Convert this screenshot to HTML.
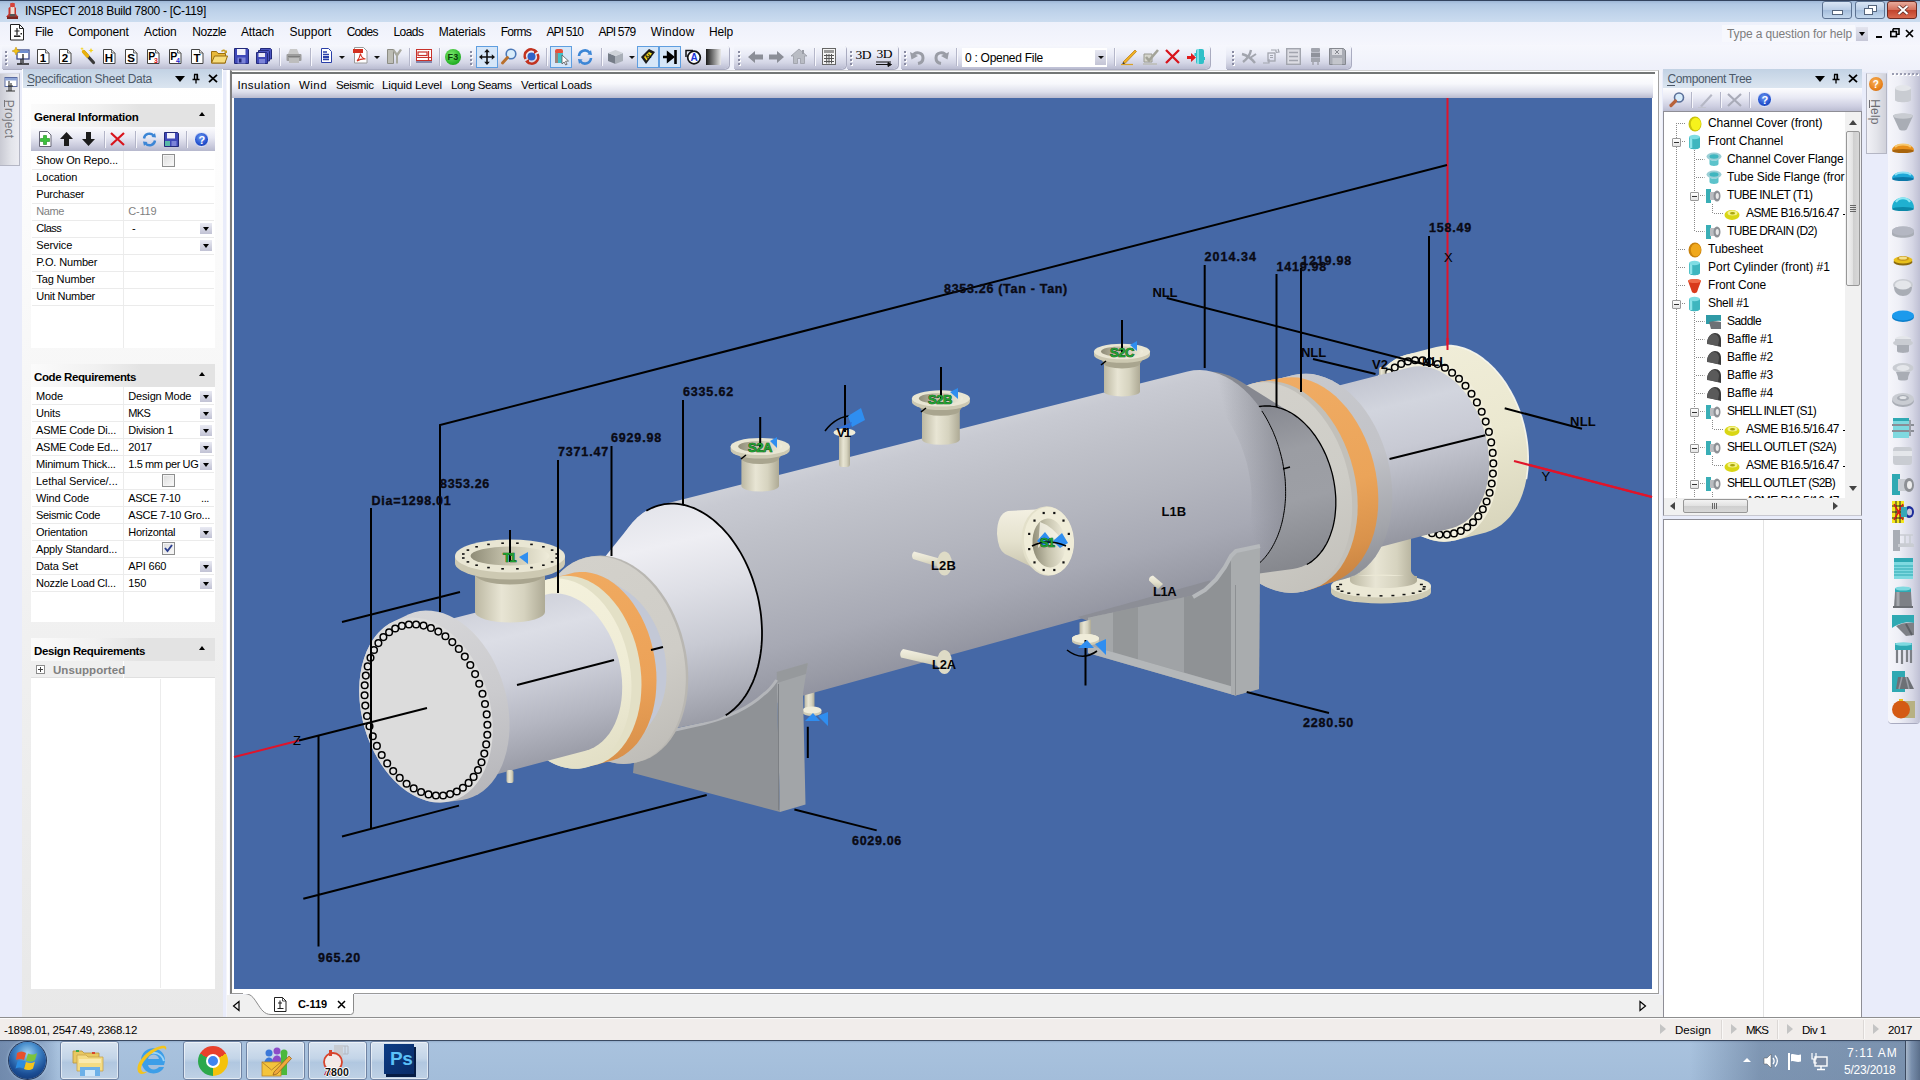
<!DOCTYPE html>
<html><head><meta charset="utf-8"><title>INSPECT 2018 Build 7800 - [C-119]</title>
<style>
*{box-sizing:border-box;margin:0;padding:0}
html,body{width:1920px;height:1080px;overflow:hidden;background:#e9ecfa;font-family:"Liberation Sans",sans-serif;font-size:12px;color:#000}
.a{position:absolute}
.t{position:absolute;white-space:nowrap;line-height:14px}
svg{position:absolute;overflow:visible}
#title{left:0;top:0;width:1920px;height:22px;background:linear-gradient(#9db6d6 0,#b1c8e3 3px,#bfd3ea 11px,#cbdcef 21px);border-top:1px solid #33435e}
#menubar{left:0;top:22px;width:1920px;height:23px;background:linear-gradient(#eef1fb,#f5f6fd)}
#tbrow{left:0;top:45px;width:1920px;height:27px;background:linear-gradient(#f6f7fd,#eef0fa)}
.tb{position:absolute;top:45px;height:24px;background:linear-gradient(#f7f8fd 0,#e9ebf6 40%,#d3d5e5 75%,#babcd1 100%);border-radius:0 4px 5px 0;box-shadow:1px 1px 0 #a9abc0}
.mi{position:absolute;top:25px;font-size:12px;line-height:14px;white-space:nowrap;letter-spacing:.3px}
.ph{position:absolute;height:19px;background:linear-gradient(#c2d2e4,#dbe5f0);color:#5a6878;font-size:12px}
.row{position:absolute;left:0;width:100%;height:17px;border-bottom:1px solid #ebebeb;font-size:11px;line-height:16px;white-space:nowrap}
.row .k{position:absolute;left:4px;top:0}
.row .v{position:absolute;left:96px;top:0}
.dd{position:absolute;left:169px;top:3px;width:11px;height:11px;background:linear-gradient(#e6e7f1,#c3c4d5)}
.dd:after{content:"";position:absolute;left:2px;top:4px;border:3.5px solid transparent;border-top:4px solid #000;border-bottom:0}
.gh{position:absolute;left:0;height:23px;width:100%;background:#e4e4e4;font-weight:bold;font-size:11.5px;line-height:23px;padding-left:2px}
.tr{position:absolute;font-size:12px;line-height:14px;white-space:nowrap;letter-spacing:.25px}
.cb{position:absolute;width:13px;height:13px;border:1px solid #8e8f8f;background:linear-gradient(135deg,#dcdcdc,#fafafa);box-shadow:inset 0 0 0 1px #f4f4f4}

</style></head><body>
<!-- sec_chrome -->
<div id="title" class="a"></div>
<svg style="left:4px;top:2px" width="17" height="18" viewBox="0 0 17 18"><path d="M6.5 1h4v3.5l1.5 1.5v6l2.5 3H2l2.500-3V6L6.500 4.500z" fill="#c9332b"/><rect x="6.500" y="5" width="4" height="7" fill="#ecdcd4"/><circle cx="8.500" cy="3" r="2.300" fill="#d8423a"/><rect x="3" y="14.500" width="11" height="2.500" fill="#7a2620"/><rect x="5.500" y="12" width="6" height="2.500" fill="#555"/></svg>
<div class="t" style="left:25px;top:3.84px;font-size:12px;line-height:14px;letter-spacing:-0.304px;">INSPECT 2018 Build 7800 - [C-119]</div>
<div class="a" style="left:1822px;top:1px;width:30px;height:18px;border:1px solid #5c7291;border-radius:3px;background:linear-gradient(#d9e6f5,#b9cde6 48%,#a5bedc 52%,#c4d8ed)"><div class="a" style="left:9px;top:8px;width:11px;height:5px;border:1px solid #55657c;background:#fff"></div></div>
<div class="a" style="left:1855px;top:1px;width:30px;height:18px;border:1px solid #5c7291;border-radius:3px;background:linear-gradient(#d9e6f5,#b9cde6 48%,#a5bedc 52%,#c4d8ed)"><div class="a" style="left:12px;top:3px;width:9px;height:7px;border:1px solid #55657c;background:#fff"></div><div class="a" style="left:8px;top:6px;width:9px;height:7px;border:1px solid #55657c;background:#fff"></div></div>
<div class="a" style="left:1887px;top:1px;width:30px;height:18px;border:1px solid #6b2a22;border-radius:3px;background:linear-gradient(#e8ab9c,#d4705c 48%,#c1432d 52%,#d96a50)"><svg style="left:9px;top:3px" width="12" height="10" viewBox="0 0 12 10"><path d="M1.5 1l9 8M10.5 1l-9 8" stroke="#5a2a25" stroke-width="3.600"/><path d="M1.500 1l9 8M10.500 1l-9 8" stroke="#fff" stroke-width="2.100"/></svg></div>
<div id="menubar" class="a"></div>
<svg style="left:10px;top:24px" width="15" height="17" viewBox="0 0 15 17"><path d="M.5.5h9l4 4v11.500H.5z" fill="#fff" stroke="#222" stroke-width="1"/><path d="M9.500.5v4h4" fill="none" stroke="#222"/><path d="M7 4v8M4.500 7h5M4 12.500h6.500M5 12v-1M9 12v-1" stroke="#222" stroke-width="1.200" fill="none"/><rect x="10.500" y="9" width="1.500" height="1.500" fill="#222"/></svg>
<div class="t" style="left:35px;top:25.14px;font-size:12px;line-height:14px;letter-spacing:-0.336px;">File</div>
<div class="t" style="left:68.2px;top:25.14px;font-size:12px;line-height:14px;letter-spacing:-0.162px;">Component</div>
<div class="t" style="left:144px;top:25.14px;font-size:12px;line-height:14px;letter-spacing:-0.127px;">Action</div>
<div class="t" style="left:192.3px;top:25.14px;font-size:12px;line-height:14px;letter-spacing:-0.498px;">Nozzle</div>
<div class="t" style="left:241px;top:25.14px;font-size:12px;line-height:14px;letter-spacing:-0.171px;">Attach</div>
<div class="t" style="left:289.4px;top:25.14px;font-size:12px;line-height:14px;letter-spacing:-0.006px;">Support</div>
<div class="t" style="left:346.7px;top:25.14px;font-size:12px;line-height:14px;letter-spacing:-0.739px;">Codes</div>
<div class="t" style="left:393.4px;top:25.14px;font-size:12px;line-height:14px;letter-spacing:-0.541px;">Loads</div>
<div class="t" style="left:438.7px;top:25.14px;font-size:12px;line-height:14px;letter-spacing:-0.221px;">Materials</div>
<div class="t" style="left:500.7px;top:25.14px;font-size:12px;line-height:14px;letter-spacing:-0.740px;">Forms</div>
<div class="t" style="left:546.4px;top:25.14px;font-size:12px;line-height:14px;letter-spacing:-0.844px;">API 510</div>
<div class="t" style="left:598.5px;top:25.14px;font-size:12px;line-height:14px;letter-spacing:-0.830px;">API 579</div>
<div class="t" style="left:650.7px;top:25.14px;font-size:12px;line-height:14px;letter-spacing:0.185px;">Window</div>
<div class="t" style="left:709px;top:25.14px;font-size:12px;line-height:14px;letter-spacing:-0.172px;">Help</div>
<div class="a" style="left:1722px;top:25px;width:133px;height:17px;background:#f7f8fd"></div>
<div class="t" style="left:1727px;top:26.84px;font-size:12px;line-height:14px;color:#7d7d7d;letter-spacing:-0.130px;">Type a question for help</div>
<div class="a" style="left:1856px;top:27px;width:12px;height:14px;background:linear-gradient(#e3e4ee,#c6c7d7)"><div class="a" style="left:3px;top:5px;border:3px solid transparent;border-top:4px solid #000;border-bottom:0"></div></div>
<div class="a" style="left:1876px;top:36px;width:6px;height:2px;background:#000"></div>
<svg style="left:1890px;top:28px" width="10" height="10" viewBox="0 0 10 10"><path d="M3 .8h6v5.400H7M3 .8V3" fill="none" stroke="#000" stroke-width="1.600"/><rect x=".8" y="3.600" width="5.600" height="5" fill="none" stroke="#000" stroke-width="1.600"/></svg>
<svg style="left:1905px;top:29px" width="9" height="9" viewBox="0 0 9 9"><path d="M1 1l7 7M8 1L1 8" stroke="#000" stroke-width="1.700"/></svg>
<!-- sec_toolbar -->
<div id="tbrow" class="a"></div>
<div class="tb" style="left:2px;width:727px"></div>
<div class="tb" style="left:734px;width:112px"></div>
<div class="tb" style="left:847px;width:51px"></div>
<div class="tb" style="left:901px;width:309px"></div>
<div class="tb" style="left:1226px;width:125px"></div>
<div class="a" style="left:5px;top:51px;width:2px;height:2px;background:#8a8ca3;box-shadow:1px 1px 0 #fff"></div><div class="a" style="left:5px;top:55px;width:2px;height:2px;background:#8a8ca3;box-shadow:1px 1px 0 #fff"></div><div class="a" style="left:5px;top:59px;width:2px;height:2px;background:#8a8ca3;box-shadow:1px 1px 0 #fff"></div><div class="a" style="left:5px;top:63px;width:2px;height:2px;background:#8a8ca3;box-shadow:1px 1px 0 #fff"></div>
<svg style="left:12px;top:47px" width="18" height="19" viewBox="0 0 18 19"><rect x="5" y="3" width="12" height="9" fill="#fff" stroke="#3b4a8a" stroke-width="1.300"/><rect x="5.500" y="3.500" width="11" height="2.500" fill="#6f8fd0"/><path d="M9 12v5M5 17h12M11 7v9" stroke="#222" stroke-width="1.300"/><path d="M4 0l1.200 2.800L8 4 5.200 5.200 4 8 2.800 5.200 0 4l2.800-1.200z" fill="#f2c318" stroke="#c08a00" stroke-width=".5"/></svg>
<svg style="left:37px;top:48px" width="13" height="17" viewBox="0 0 13 17"><path d="M.5 1.500h8l3.500 3.500v10.500H.5z" fill="#fff" stroke="#444" stroke-width="1"/><path d="M8.500 1.500V5H12" fill="#d8d8d8" stroke="#444" stroke-width=".8"/><text x="6" y="13.500" font-size="11.500" font-weight="bold" fill="#000" text-anchor="middle">1</text></svg>
<svg style="left:59px;top:48px" width="13" height="17" viewBox="0 0 13 17"><path d="M.5 1.500h8l3.500 3.500v10.500H.5z" fill="#fff" stroke="#444" stroke-width="1"/><path d="M8.500 1.500V5H12" fill="#d8d8d8" stroke="#444" stroke-width=".8"/><text x="6" y="13.500" font-size="11.500" font-weight="bold" fill="#000" text-anchor="middle">2</text></svg>
<svg style="left:80px;top:47px" width="16" height="18" viewBox="0 0 16 18"><path d="M4 5l9.500 10.500" stroke="#3a3a3a" stroke-width="3.200" stroke-linecap="round"/><path d="M3.500 4.500l4 4.500" stroke="#e9b10c" stroke-width="3.400" stroke-linecap="round"/><path d="M11 1l.8 1.700 1.700.8-1.700.8L11 6l-.8-1.700-1.700-.8 1.700-.8zM2 0l.5 1.200L3.700 1.700 2.500 2.200 2 3.400 1.500 2.200.3 1.700 1.500 1.200z" fill="#f5d21b"/></svg>
<svg style="left:103px;top:48px" width="13" height="17" viewBox="0 0 13 17"><path d="M.5 1.500h8l3.500 3.500v10.500H.5z" fill="#fff" stroke="#444" stroke-width="1"/><path d="M8.500 1.500V5H12" fill="#d8d8d8" stroke="#444" stroke-width=".8"/><text x="6" y="13.500" font-size="11.500" font-weight="bold" fill="#000" text-anchor="middle">H</text></svg>
<svg style="left:125px;top:48px" width="13" height="17" viewBox="0 0 13 17"><path d="M.5 1.500h8l3.500 3.500v10.500H.5z" fill="#fff" stroke="#444" stroke-width="1"/><path d="M8.500 1.500V5H12" fill="#d8d8d8" stroke="#444" stroke-width=".8"/><text x="6" y="13.500" font-size="11.500" font-weight="bold" fill="#000" text-anchor="middle">S</text></svg>
<svg style="left:147px;top:48px" width="13" height="17" viewBox="0 0 13 17"><path d="M.5 1.500h8l3.500 3.500v10.500H.5z" fill="#fff" stroke="#444" stroke-width="1"/><path d="M8.500 1.500V5H12" fill="#d8d8d8" stroke="#444" stroke-width=".8"/><text x="1.200" y="11.500" font-size="10.500" font-weight="bold" fill="#000">P</text><text x="7" y="14.500" font-size="7" font-weight="bold" fill="#d11">3</text></svg>
<svg style="left:169px;top:48px" width="13" height="17" viewBox="0 0 13 17"><path d="M.5 1.500h8l3.500 3.500v10.500H.5z" fill="#fff" stroke="#444" stroke-width="1"/><path d="M8.500 1.500V5H12" fill="#d8d8d8" stroke="#444" stroke-width=".8"/><text x="1.200" y="11.500" font-size="10.500" font-weight="bold" fill="#000">P</text><text x="7" y="14.500" font-size="7" font-weight="bold" fill="#22c">4</text></svg>
<svg style="left:191px;top:48px" width="13" height="17" viewBox="0 0 13 17"><path d="M.5 1.500h8l3.500 3.500v10.500H.5z" fill="#fff" stroke="#444" stroke-width="1"/><path d="M8.500 1.500V5H12" fill="#d8d8d8" stroke="#444" stroke-width=".8"/><text x="6" y="13.500" font-size="11.500" font-weight="bold" fill="#000" text-anchor="middle">T</text></svg>
<svg style="left:211px;top:48px" width="17" height="16" viewBox="0 0 17 16"><path d="M.5 3.500h5l1.500 2h7.500v9.500H.5z" fill="#e9b93a" stroke="#9a6f10" stroke-width="1"/><path d="M.5 15l3-7h13l-2.500 7z" fill="#f7dd7c" stroke="#9a6f10" stroke-width="1"/><path d="M10 3c1.500-2 4-2 5 0l1-1v3h-3l1-1c-.8-1-2-1-3 0z" fill="#c9a02a"/></svg>
<svg style="left:234px;top:48px" width="15" height="16" viewBox="0 0 15 16"><path d="M.5.5h13l1 1v14H.5z" fill="#3f49b8" stroke="#232a7a"/><rect x="3" y="1" width="8.500" height="6" fill="#f2f2fa"/><rect x="3.500" y="9.500" width="8" height="6" fill="#7c84d8"/><rect x="5" y="10.500" width="2.500" height="4" fill="#232a7a"/></svg>
<svg style="left:256px;top:48px" width="16" height="16" viewBox="0 0 16 16"><path d="M4.500.5h10l1 1v9.500h-11z" fill="#4b55c0" stroke="#232a7a"/><path d="M2.500 2.500h10l1 1v9.500h-11z" fill="#4b55c0" stroke="#232a7a"/><path d="M.5 4.500h10l1 1v10h-11z" fill="#3f49b8" stroke="#232a7a"/><rect x="2.500" y="5" width="6.500" height="4" fill="#e8e8f6"/><rect x="3" y="11" width="6" height="4.500" fill="#7c84d8"/></svg>
<div class="a" style="left:278.5px;top:48px;width:1px;height:18px;background:#b5b7ca;box-shadow:1px 0 0 #f8f8fd"></div>
<svg style="left:286px;top:48px" width="16" height="16" viewBox="0 0 16 16"><path d="M4 1h7l2 5H2z" fill="#c9c9c9"/><rect x=".5" y="6" width="15" height="7" rx="1" fill="#9d9d9d"/><rect x="3" y="10" width="10" height="5" fill="#bdbdbd"/><rect x="2" y="8" width="12" height="1" fill="#7d7d7d"/></svg>
<div class="a" style="left:309.5px;top:48px;width:1px;height:18px;background:#b5b7ca;box-shadow:1px 0 0 #f8f8fd"></div>
<svg style="left:321px;top:48px" width="11" height="15" viewBox="0 0 11 15"><path d="M.5.5h7l3 3v11H.5z" fill="#fff" stroke="#2a3fa8"/><path d="M2 4h4M2 6.500h6M2 11.500h6" stroke="#2a3fa8" stroke-width="1.300"/><rect x="2" y="8" width="6" height="2.300" fill="#2a3fa8"/></svg>
<div class="a" style="left:338.5px;top:56px;border:3px solid transparent;border-top:3.500px solid #111;border-bottom:0"></div>
<svg style="left:353px;top:47px" width="15" height="17" viewBox="0 0 15 17"><path d="M1.500.5h9l3.500 3.500v12H1.500z" fill="#fff" stroke="#9a9a9a"/><rect x="0" y="2" width="10" height="4" fill="#d32f1f"/><path d="M4 14c2-2 3-5 3.500-7.500M7.500 6.500c.5 3 2.500 5 5 5.500-3-.5-6 .5-8.500 2" stroke="#d32f1f" stroke-width="1.100" fill="none"/></svg>
<div class="a" style="left:373.5px;top:56px;border:3px solid transparent;border-top:3.500px solid #111;border-bottom:0"></div>
<svg style="left:387px;top:48px" width="15" height="16" viewBox="0 0 15 16"><path d="M.5 1.500h6v14h-6z" fill="#bdbdb5" stroke="#8c8c84"/><path d="M7 1l3 4 3-4 2 1-4 6v7.500H9V8L5.500 2.500z" fill="#a9a99f"/></svg>
<div class="a" style="left:408.5px;top:48px;width:1px;height:18px;background:#b5b7ca;box-shadow:1px 0 0 #f8f8fd"></div>
<svg style="left:416px;top:49px" width="16" height="14" viewBox="0 0 16 14"><rect x=".5" y=".5" width="15" height="11" fill="#fff" stroke="#c8312b"/><rect x="2" y="3" width="9" height="3.500" fill="none" stroke="#c8312b" stroke-width="1.200"/><path d="M1 8.500h14M12.500 2v9" stroke="#c8312b" stroke-width="1.200"/><path d="M0 13h16" stroke="#6b6b9a" stroke-width="1.500"/></svg>
<div class="a" style="left:438.5px;top:48px;width:1px;height:18px;background:#b5b7ca;box-shadow:1px 0 0 #f8f8fd"></div>
<div class="a" style="left:445px;top:49px;width:16px;height:16px;border-radius:8px;background:radial-gradient(circle at 40% 35%,#7be86d,#27b327 65%,#168a16)"></div>
<div class="t" style="left:447.5px;top:52.38px;font-size:9px;line-height:11px;font-weight:bold;color:#0b3d0b;letter-spacing:0.250px;">F3</div>
<div class="a" style="left:470px;top:51px;width:2px;height:2px;background:#8a8ca3;box-shadow:1px 1px 0 #fff"></div><div class="a" style="left:470px;top:55px;width:2px;height:2px;background:#8a8ca3;box-shadow:1px 1px 0 #fff"></div><div class="a" style="left:470px;top:59px;width:2px;height:2px;background:#8a8ca3;box-shadow:1px 1px 0 #fff"></div><div class="a" style="left:470px;top:63px;width:2px;height:2px;background:#8a8ca3;box-shadow:1px 1px 0 #fff"></div>
<div class="a" style="left:476px;top:46px;width:22px;height:22px;border:1px solid #5f9ee0;background:#d6e6f8"></div>
<svg style="left:479px;top:49px" width="16" height="16" viewBox="0 0 16 16"><path d="M8 0l2.800 3.200H8.800v4h4V5.200L16 8l-3.200 2.800V8.800h-4v4h2L8 16l-2.800-3.200h2v-4h-4v2L0 8l3.200-2.800v2h4v-4h-2z" fill="#111"/></svg>
<svg style="left:501px;top:48px" width="16" height="17" viewBox="0 0 16 17"><circle cx="10" cy="6" r="4.800" fill="#d8ecfb" stroke="#4a78b8" stroke-width="1.600"/><path d="M6.500 9.500L1.500 15" stroke="#b9702c" stroke-width="3" stroke-linecap="round"/></svg>
<svg style="left:523px;top:48px" width="17" height="17" viewBox="0 0 17 17"><circle cx="8.500" cy="8.500" r="4" fill="#2f62c8"/><path d="M2.500 11A6.500 6.500 0 0 1 13 3.500" fill="none" stroke="#c2321f" stroke-width="2.600"/><path d="M14.500 6A6.500 6.500 0 0 1 4 13.500" fill="none" stroke="#c2321f" stroke-width="2.600"/><path d="M11 1l4 2.500-4 2.500zM6 16l-4-2.500 4-2.500z" fill="#c2321f"/></svg>
<div class="a" style="left:545.5px;top:48px;width:1px;height:18px;background:#b5b7ca;box-shadow:1px 0 0 #f8f8fd"></div>
<div class="a" style="left:550px;top:46px;width:22px;height:22px;border:1px solid #5f9ee0;background:#d6e6f8"></div>
<svg style="left:554px;top:48px" width="16" height="18" viewBox="0 0 16 18"><rect x="1" y="1" width="8" height="5" rx="2" fill="#e8503a"/><rect x="1" y="5" width="8" height="10" fill="#3fc0c8"/><rect x="1" y="5" width="3" height="10" fill="#e8503a" opacity=".55"/><path d="M8 7l6.500 6-3 .3 1.600 3-1.400.7-1.600-3-2.100 2z" fill="#fff" stroke="#555" stroke-width=".8"/></svg>
<svg style="left:577px;top:49px" width="16" height="16" viewBox="0 0 16 16"><path d="M2 7a6 6 0 0 1 10.500-3.500" fill="none" stroke="#3c86d6" stroke-width="2.600"/><path d="M14 9a6 6 0 0 1-10.500 3.500" fill="none" stroke="#3c86d6" stroke-width="2.600"/><path d="M10.500 5.500l4.500.5L14 1zM5.500 10.500L1 10l1 5z" fill="#3c86d6"/></svg>
<div class="a" style="left:600.5px;top:48px;width:1px;height:18px;background:#b5b7ca;box-shadow:1px 0 0 #f8f8fd"></div>
<svg style="left:608px;top:50px" width="15" height="14" viewBox="0 0 15 14"><path d="M0 3l7.500 3v8L0 11z" fill="#767d88"/><path d="M15 3L7.500 6v8L15 11z" fill="#a9afb8"/><path d="M0 3l7.500-3L15 3 7.500 6z" fill="#cfd3d9"/></svg>
<div class="a" style="left:628.5px;top:56px;border:3px solid transparent;border-top:3.500px solid #111;border-bottom:0"></div>
<div class="a" style="left:637px;top:46px;width:22px;height:22px;border:1px solid #5f9ee0;background:#d6e6f8"></div>
<div class="a" style="left:659px;top:46px;width:22px;height:22px;border:1px solid #5f9ee0;background:#d6e6f8"></div>
<svg style="left:640px;top:48px" width="16" height="17" viewBox="0 0 16 17"><path d="M1 9l8-8 6 3-9 12z" fill="#1b1b1b"/><path d="M4 9l5-5 3 1.500-5.500 7z" fill="#f0dc1a"/><text x="5.200" y="11" font-size="7" font-weight="bold" fill="#111" transform="rotate(-35 8 8)">N</text></svg>
<svg style="left:663px;top:50px" width="15" height="14" viewBox="0 0 15 14"><path d="M0 7h8M5 3l5 4-5 4z" stroke="#000" stroke-width="2.400" fill="#000"/><path d="M12.500 0v14" stroke="#000" stroke-width="2.600"/></svg>
<svg style="left:685px;top:48px" width="17" height="17" viewBox="0 0 17 17"><circle cx="9" cy="9.500" r="6.300" fill="#fff" stroke="#111" stroke-width="1.700"/><path d="M1 9V2.500h7" fill="none" stroke="#111" stroke-width="1.500"/><text x="9" y="13.300" font-size="10" font-weight="bold" fill="#1a35d8" text-anchor="middle">A</text></svg>
<div class="a" style="left:706px;top:49px;width:15px;height:16px;background:linear-gradient(90deg,#1a1a1a,#8a8a8a 55%,#e8e8e8)"></div>
<div class="a" style="left:738px;top:51px;width:2px;height:2px;background:#8a8ca3;box-shadow:1px 1px 0 #fff"></div><div class="a" style="left:738px;top:55px;width:2px;height:2px;background:#8a8ca3;box-shadow:1px 1px 0 #fff"></div><div class="a" style="left:738px;top:59px;width:2px;height:2px;background:#8a8ca3;box-shadow:1px 1px 0 #fff"></div><div class="a" style="left:738px;top:63px;width:2px;height:2px;background:#8a8ca3;box-shadow:1px 1px 0 #fff"></div>
<svg style="left:748px;top:51px" width="15" height="12" viewBox="0 0 15 12"><path d="M0 6l7-6v3.500h8v5H7V12z" fill="#8b8e97"/></svg>
<svg style="left:769px;top:51px" width="15" height="12" viewBox="0 0 15 12"><path d="M15 6L8 0v3.500H0v5h8V12z" fill="#8b8e97"/></svg>
<svg style="left:791px;top:48px" width="16" height="16" viewBox="0 0 16 16"><path d="M8 1L0 8h2.500v7.500h4v-5h3v5h4V8H16z" fill="#b9bcc4" stroke="#9a9da6" stroke-width=".8"/><rect x="11" y="2" width="2" height="4" fill="#9a9da6"/></svg>
<div class="a" style="left:813.5px;top:48px;width:1px;height:18px;background:#b5b7ca;box-shadow:1px 0 0 #f8f8fd"></div>
<svg style="left:822px;top:48px" width="14" height="17" viewBox="0 0 14 17"><rect x=".5" y=".5" width="13" height="16" fill="#f4f4f4" stroke="#666"/><rect x="2" y="2" width="10" height="3" fill="#9a9a9a"/><path d="M2 7.500h10M2 10.500h10M2 13.500h10M4.700 6v9.500M7 6v9.500M9.500 6v9.500" stroke="#555" stroke-width="1"/></svg>
<div class="a" style="left:850px;top:51px;width:2px;height:2px;background:#8a8ca3;box-shadow:1px 1px 0 #fff"></div><div class="a" style="left:850px;top:55px;width:2px;height:2px;background:#8a8ca3;box-shadow:1px 1px 0 #fff"></div><div class="a" style="left:850px;top:59px;width:2px;height:2px;background:#8a8ca3;box-shadow:1px 1px 0 #fff"></div><div class="a" style="left:850px;top:63px;width:2px;height:2px;background:#8a8ca3;box-shadow:1px 1px 0 #fff"></div>
<div class="t" style="left:855.5px;top:47px;font-family:'Liberation Serif',serif;font-size:13.500px;letter-spacing:-.6px;line-height:16px">3D</div>
<div class="t" style="left:876.5px;top:46px;font-family:'Liberation Serif',serif;font-size:13.500px;letter-spacing:-.6px;line-height:16px">3D</div>
<svg style="left:876px;top:61px" width="16" height="5" viewBox="0 0 16 5"><path d="M0 1h15M0 3.500h12M12 1.500l3.500 2-3.500 2z" stroke="#111" stroke-width="1" fill="#111"/></svg>
<div class="a" style="left:904px;top:51px;width:2px;height:2px;background:#8a8ca3;box-shadow:1px 1px 0 #fff"></div><div class="a" style="left:904px;top:55px;width:2px;height:2px;background:#8a8ca3;box-shadow:1px 1px 0 #fff"></div><div class="a" style="left:904px;top:59px;width:2px;height:2px;background:#8a8ca3;box-shadow:1px 1px 0 #fff"></div><div class="a" style="left:904px;top:63px;width:2px;height:2px;background:#8a8ca3;box-shadow:1px 1px 0 #fff"></div>
<svg style="left:910px;top:49px" width="15" height="15" viewBox="0 0 15 15"><path d="M3 7c2-5 10-4 10 2 0 3-2 5-5 5.500" fill="none" stroke="#9a9da6" stroke-width="3"/><path d="M0 3l1.500 7.500L8 7z" fill="#9a9da6"/></svg>
<svg style="left:934px;top:49px" width="15" height="15" viewBox="0 0 15 15"><path d="M12 7C10 2 2 3 2 9c0 3 2 5 5 5.500" fill="none" stroke="#9a9da6" stroke-width="3"/><path d="M15 3l-1.500 7.500L7 7z" fill="#9a9da6"/></svg>
<div class="a" style="left:955.5px;top:48px;width:1px;height:18px;background:#b5b7ca;box-shadow:1px 0 0 #f8f8fd"></div>
<div class="a" style="left:962px;top:48px;width:145px;height:19px;background:#fff"></div>
<div class="t" style="left:965px;top:51.14px;font-size:12px;line-height:14px;letter-spacing:-0.272px;">0 : Opened File</div>
<div class="a" style="left:1095px;top:50px;width:11px;height:15px;background:linear-gradient(#e6e7f1,#c3c4d5)"></div>
<div class="a" style="left:1097.5px;top:56px;border:3px solid transparent;border-top:3.500px solid #111;border-bottom:0"></div>
<div class="a" style="left:1113.5px;top:48px;width:1px;height:18px;background:#b5b7ca;box-shadow:1px 0 0 #f8f8fd"></div>
<svg style="left:1121px;top:48px" width="17" height="17" viewBox="0 0 17 17"><path d="M2 14L14 2l1.500 1.500L4 15.500z" fill="#f0b021" stroke="#b87a10" stroke-width=".7"/><path d="M2 14l-1 3 3-1.500z" fill="#333"/><path d="M0 16.500h12" stroke="#d9a227" stroke-width="1.200"/></svg>
<svg style="left:1143px;top:48px" width="16" height="17" viewBox="0 0 16 17"><path d="M1 6h8v8H1z" fill="#d5d5cc" stroke="#9a9a90"/><path d="M3 9l3 3.500L15 2" fill="none" stroke="#a3a398" stroke-width="2.600"/><path d="M0 16h14" stroke="#b8b8ae" stroke-width="1.300"/></svg>
<svg style="left:1165px;top:49px" width="15" height="15" viewBox="0 0 15 15"><path d="M1 1l13 13M14 1L1 14" stroke="#d8141c" stroke-width="2.300"/></svg>
<svg style="left:1187px;top:48px" width="18" height="17" viewBox="0 0 18 17"><path d="M0 8h4V5l5 4.500L4 14v-3H0z" fill="#e01b1b"/><rect x="9" y="1" width="8" height="15" rx="2" fill="#2fc0c8"/><rect x="7.500" y="5" width="4" height="3" fill="#2fc0c8"/><rect x="14" y="9" width="4" height="3" fill="#2fc0c8"/><path d="M11 1v15" stroke="#7fe0e6" stroke-width="2"/></svg>
<div class="a" style="left:1232px;top:51px;width:2px;height:2px;background:#8a8ca3;box-shadow:1px 1px 0 #fff"></div><div class="a" style="left:1232px;top:55px;width:2px;height:2px;background:#8a8ca3;box-shadow:1px 1px 0 #fff"></div><div class="a" style="left:1232px;top:59px;width:2px;height:2px;background:#8a8ca3;box-shadow:1px 1px 0 #fff"></div><div class="a" style="left:1232px;top:63px;width:2px;height:2px;background:#8a8ca3;box-shadow:1px 1px 0 #fff"></div>
<svg style="left:1241px;top:49px" width="16" height="15" viewBox="0 0 16 15"><path d="M2 13C6 10 9 6 10 1M1 5c4 1 9 4 13 9" fill="none" stroke="#a2a5ae" stroke-width="2.400"/><path d="M9 9l6-4" stroke="#a2a5ae" stroke-width="2"/></svg>
<svg style="left:1263px;top:48px" width="17" height="17" viewBox="0 0 17 17"><rect x="5" y="5" width="7" height="8" fill="none" stroke="#a2a5ae" stroke-width="1.300"/><path d="M0 15h6v-4M7 7.500h3M7 9.500h3M8 2h5v2M15 1l1 3-3 .5" fill="none" stroke="#a2a5ae" stroke-width="1.200"/></svg>
<svg style="left:1286px;top:48px" width="15" height="17" viewBox="0 0 15 17"><rect x=".7" y=".7" width="13.600" height="15.600" fill="#dcdde3" stroke="#a2a5ae" stroke-width="1.400"/><path d="M3 4.500h9M3 8.500h9M3 12.500h9" stroke="#a2a5ae" stroke-width="1.600"/></svg>
<svg style="left:1310px;top:48px" width="11" height="17" viewBox="0 0 11 17"><rect x="1" y="0" width="9" height="4" rx="1" fill="#a2a5ae"/><rect x="1" y="4.500" width="9" height="5" fill="#8f929b"/><rect x="1" y="10" width="9" height="4" fill="#a2a5ae"/><path d="M3 14v3M8 14v3" stroke="#a2a5ae" stroke-width="1.500"/></svg>
<svg style="left:1329px;top:48px" width="17" height="17" viewBox="0 0 17 17"><path d="M.5.5h14l2 2v14H.5z" fill="#a9acb4" stroke="#85888f"/><rect x="3" y="1" width="10" height="6" fill="#d9dadf"/><rect x="3.500" y="10" width="9.500" height="6.500" fill="#c3c5cb"/><path d="M6 2l4 4M10 2L6 6" stroke="#85888f" stroke-width="1"/></svg>
<!-- sec_left -->
<div class="a" style="left:0;top:73px;width:20px;height:93px;background:linear-gradient(90deg,#c9cad3,#e3e4ea 60%,#ececf2);border:1px solid #b4b6c4;border-left:0;border-top-color:#d9dae3"></div>
<svg style="left:3px;top:77px" width="15" height="15" viewBox="0 0 15 15"><rect x="2" y=".5" width="12" height="9" fill="#fff" stroke="#5a6aa0"/><rect x="2" y="1" width="12" height="2.500" fill="#8fa6d8"/><path d="M6 4v10M3 14h9M8 6v8M5 9h5" stroke="#333" stroke-width="1.100"/></svg>
<div class="t" style="left:-14px;top:111px;width:46px;height:16px;font-size:12px;line-height:16px;color:#77777c;transform:rotate(90deg);letter-spacing:.15px;text-align:center">Project</div><div class="a" style="left:4px;top:100px;width:1px;height:7px;background:#77777c"></div>
<div class="a" style="left:22px;top:69px;width:201px;height:949px;background:linear-gradient(#fff,#fafafa 20%,#f0f0f0 60%,#e8e8e8)"></div>
<div class="ph" style="left:23px;top:69px;width:199px"></div>
<div class="t" style="left:27px;top:71.84px;font-size:12px;line-height:14px;color:#4c5969;letter-spacing:-0.269px;">Specification Sheet Data</div>
<div class="a" style="left:27px;top:85px;width:7px;height:1px;background:#4c5969"></div>
<div class="a" style="left:175px;top:76px;border:5px solid transparent;border-top:6px solid #000;border-bottom:0"></div>
<svg style="left:192px;top:74px" width="8" height="10" viewBox="0 0 8 10"><path d="M2 .5h4M2.500 .5v5M5.500 .5v5M.5 5.500h7M4 5.500v4" stroke="#000" stroke-width="1.300" fill="none"/><rect x="4.500" y="1" width="1.500" height="4.500" fill="#000"/></svg>
<svg style="left:208px;top:74px" width="10" height="9" viewBox="0 0 10 9"><path d="M1 .8l8 7.400M9 .8L1 8.200" stroke="#000" stroke-width="1.800"/></svg>
<div class="a" style="left:31px;top:104px;width:184px;height:23px;background:linear-gradient(90deg,#fbfbfb,#f1f1f1 35%,#e3e3e3 60%,#e3e3e3)"></div>
<div class="t" style="left:34px;top:109.52px;font-size:11.5px;line-height:14px;font-weight:bold;letter-spacing:-0.250px;">General Information</div>
<div class="a" style="left:199px;top:112px;border:3.500px solid transparent;border-bottom:4px solid #000;border-top:0"></div>
<div class="a" style="left:31px;top:127px;width:184px;height:24px;background:linear-gradient(#fcfcfe,#e6e7f2 45%,#c9cadc 80%,#b6b8cd)"></div>
<svg style="left:39px;top:131px" width="13" height="16" viewBox="0 0 13 16"><path d="M.5.5h8l3.500 3.500v11.500H.5z" fill="#fff" stroke="#667"/><path d="M4.500 4.500h3v3h3v3h-3v3h-3v-3h-3v-3h3z" fill="#3cc23c" stroke="#1a8a1a" stroke-width=".6"/></svg>
<svg style="left:60px;top:132px" width="13" height="14" viewBox="0 0 13 14"><path d="M6.500 0L13 7H9v7H4V7H0z" fill="#1c1c1c"/></svg>
<svg style="left:82px;top:132px" width="13" height="14" viewBox="0 0 13 14"><path d="M6.500 14L13 7H9V0H4v7H0z" fill="#1c1c1c"/></svg>
<div class="a" style="left:104px;top:131px;width:1px;height:17px;background:#b3b5c8;box-shadow:1px 0 0 #f6f6fb"></div>
<svg style="left:110px;top:132px" width="15" height="14" viewBox="0 0 15 14"><path d="M1 1l13 12M14 1L1 13" stroke="#d8141c" stroke-width="2.200"/></svg>
<div class="a" style="left:135px;top:131px;width:1px;height:17px;background:#b3b5c8;box-shadow:1px 0 0 #f6f6fb"></div>
<svg style="left:142px;top:132px" width="15" height="15" viewBox="0 0 15 15"><path d="M2 6.500a5.500 5.500 0 0 1 9.500-3" fill="none" stroke="#3c86d6" stroke-width="2.400"/><path d="M13 8.500a5.500 5.500 0 0 1-9.500 3" fill="none" stroke="#3c86d6" stroke-width="2.400"/><path d="M9.500 5l4.500.5-1-4.500zM5.500 10L1 9.500l1 4.500z" fill="#3c86d6"/></svg>
<svg style="left:164px;top:132px" width="15" height="15" viewBox="0 0 15 15"><path d="M.5.5h13l1 1v13H.5z" fill="#3f49b8" stroke="#232a7a"/><rect x="3" y="1" width="8" height="5.500" fill="#f2f2fa"/><rect x="1" y="9" width="5" height="5" fill="#58b8a8"/><rect x="7.500" y="9" width="5" height="5" fill="#7c84d8"/></svg>
<div class="a" style="left:186px;top:131px;width:1px;height:17px;background:#b3b5c8;box-shadow:1px 0 0 #f6f6fb"></div>
<div class="a" style="left:194px;top:132px;width:15px;height:15px;border-radius:8px;background:radial-gradient(circle at 45% 35%,#6f9af0,#2452cf 60%,#12339a);border:1px solid #dfe6fa"></div>
<div class="t" style="left:198.5px;top:133.69px;font-size:11px;line-height:13px;font-weight:bold;color:#fff;">?</div>
<div class="a" style="left:31px;top:151px;width:184px;height:197px;background:#fff"></div>
<div class="a" style="left:123px;top:151px;width:1px;height:197px;background:#ececec"></div>
<div class="t" style="left:36.3px;top:154.49px;font-size:11px;line-height:13px;letter-spacing:-0.137px;">Show On Repo...</div>
<div class="cb" style="left:162px;top:154px"></div>
<div class="a" style="left:32px;top:169px;width:182px;height:1px;background:#ebebeb"></div>
<div class="t" style="left:36.3px;top:171.49px;font-size:11px;line-height:13px;letter-spacing:-0.073px;">Location</div>
<div class="a" style="left:32px;top:186px;width:182px;height:1px;background:#ebebeb"></div>
<div class="t" style="left:36.3px;top:188.49px;font-size:11px;line-height:13px;letter-spacing:-0.237px;">Purchaser</div>
<div class="a" style="left:32px;top:203px;width:182px;height:1px;background:#ebebeb"></div>
<div class="t" style="left:36.3px;top:205.49px;font-size:11px;line-height:13px;color:#7f7f7f;letter-spacing:-0.411px;">Name</div>
<div class="t" style="left:128.3px;top:205.49px;font-size:11px;line-height:13px;color:#7f7f7f;letter-spacing:-0.229px;">C-119</div>
<div class="a" style="left:32px;top:220px;width:182px;height:1px;background:#ebebeb"></div>
<div class="t" style="left:36.3px;top:222.49px;font-size:11px;line-height:13px;letter-spacing:-0.502px;">Class</div>
<div class="t" style="left:132px;top:222.49px;font-size:11px;line-height:13px;">-</div>
<div class="a" style="left:200px;top:223px;width:12px;height:11px;background:linear-gradient(#e9eaf3,#c1c2d4)"><div class="a" style="left:2.500px;top:4px;border:3.500px solid transparent;border-top:4px solid #000;border-bottom:0"></div></div>
<div class="a" style="left:32px;top:237px;width:182px;height:1px;background:#ebebeb"></div>
<div class="t" style="left:36.3px;top:239.49px;font-size:11px;line-height:13px;letter-spacing:-0.097px;">Service</div>
<div class="a" style="left:200px;top:240px;width:12px;height:11px;background:linear-gradient(#e9eaf3,#c1c2d4)"><div class="a" style="left:2.500px;top:4px;border:3.500px solid transparent;border-top:4px solid #000;border-bottom:0"></div></div>
<div class="a" style="left:32px;top:254px;width:182px;height:1px;background:#ebebeb"></div>
<div class="t" style="left:36.3px;top:256.49px;font-size:11px;line-height:13px;letter-spacing:-0.160px;">P.O. Number</div>
<div class="a" style="left:32px;top:271px;width:182px;height:1px;background:#ebebeb"></div>
<div class="t" style="left:36.3px;top:273.49px;font-size:11px;line-height:13px;letter-spacing:-0.121px;">Tag Number</div>
<div class="a" style="left:32px;top:288px;width:182px;height:1px;background:#ebebeb"></div>
<div class="t" style="left:36.3px;top:290.49px;font-size:11px;line-height:13px;letter-spacing:-0.277px;">Unit Number</div>
<div class="a" style="left:32px;top:305px;width:182px;height:1px;background:#ebebeb"></div>
<div class="a" style="left:31px;top:364px;width:184px;height:23px;background:linear-gradient(90deg,#fbfbfb,#f1f1f1 35%,#e3e3e3 60%,#e3e3e3)"></div>
<div class="t" style="left:34px;top:369.72px;font-size:11.5px;line-height:14px;font-weight:bold;letter-spacing:-0.389px;">Code Requirements</div>
<div class="a" style="left:199px;top:372px;border:3.500px solid transparent;border-bottom:4px solid #000;border-top:0"></div>
<div class="a" style="left:31px;top:387px;width:184px;height:235px;background:#fff"></div>
<div class="a" style="left:123px;top:387px;width:1px;height:235px;background:#ececec"></div>
<div class="t" style="left:36px;top:389.69px;font-size:11px;line-height:13px;letter-spacing:-0.129px;">Mode</div>
<div class="t" style="left:128.3px;top:389.69px;font-size:11px;line-height:13px;letter-spacing:-0.165px;">Design Mode</div>
<div class="a" style="left:200px;top:391px;width:12px;height:11px;background:linear-gradient(#e9eaf3,#c1c2d4)"><div class="a" style="left:2.500px;top:4px;border:3.500px solid transparent;border-top:4px solid #000;border-bottom:0"></div></div>
<div class="a" style="left:32px;top:404px;width:182px;height:1px;background:#ebebeb"></div>
<div class="t" style="left:36px;top:406.69px;font-size:11px;line-height:13px;letter-spacing:-0.152px;">Units</div>
<div class="t" style="left:128.3px;top:406.69px;font-size:11px;line-height:13px;letter-spacing:-0.612px;">MKS</div>
<div class="a" style="left:200px;top:408px;width:12px;height:11px;background:linear-gradient(#e9eaf3,#c1c2d4)"><div class="a" style="left:2.500px;top:4px;border:3.500px solid transparent;border-top:4px solid #000;border-bottom:0"></div></div>
<div class="a" style="left:32px;top:421px;width:182px;height:1px;background:#ebebeb"></div>
<div class="t" style="left:36px;top:423.69px;font-size:11px;line-height:13px;letter-spacing:-0.209px;">ASME Code Di...</div>
<div class="t" style="left:128.3px;top:423.69px;font-size:11px;line-height:13px;letter-spacing:-0.299px;">Division 1</div>
<div class="a" style="left:200px;top:425px;width:12px;height:11px;background:linear-gradient(#e9eaf3,#c1c2d4)"><div class="a" style="left:2.500px;top:4px;border:3.500px solid transparent;border-top:4px solid #000;border-bottom:0"></div></div>
<div class="a" style="left:32px;top:438px;width:182px;height:1px;background:#ebebeb"></div>
<div class="t" style="left:36px;top:440.69px;font-size:11px;line-height:13px;letter-spacing:-0.260px;">ASME Code Ed...</div>
<div class="t" style="left:128.3px;top:440.69px;font-size:11px;line-height:13px;letter-spacing:-0.192px;">2017</div>
<div class="a" style="left:200px;top:442px;width:12px;height:11px;background:linear-gradient(#e9eaf3,#c1c2d4)"><div class="a" style="left:2.500px;top:4px;border:3.500px solid transparent;border-top:4px solid #000;border-bottom:0"></div></div>
<div class="a" style="left:32px;top:455px;width:182px;height:1px;background:#ebebeb"></div>
<div class="t" style="left:36px;top:457.69px;font-size:11px;line-height:13px;letter-spacing:-0.201px;">Minimum Thick...</div>
<div class="t" style="left:128.3px;top:457.69px;font-size:11px;line-height:13px;letter-spacing:-0.398px;">1.5 mm per UG</div>
<div class="a" style="left:200px;top:459px;width:12px;height:11px;background:linear-gradient(#e9eaf3,#c1c2d4)"><div class="a" style="left:2.500px;top:4px;border:3.500px solid transparent;border-top:4px solid #000;border-bottom:0"></div></div>
<div class="a" style="left:32px;top:472px;width:182px;height:1px;background:#ebebeb"></div>
<div class="t" style="left:36px;top:474.69px;font-size:11px;line-height:13px;letter-spacing:-0.012px;">Lethal Service/...</div>
<div class="cb" style="left:162px;top:474px"></div>
<div class="a" style="left:32px;top:489px;width:182px;height:1px;background:#ebebeb"></div>
<div class="t" style="left:36px;top:491.69px;font-size:11px;line-height:13px;letter-spacing:-0.157px;">Wind Code</div>
<div class="t" style="left:128.3px;top:491.69px;font-size:11px;line-height:13px;letter-spacing:-0.336px;">ASCE 7-10</div>
<div class="t" style="left:201px;top:491.69px;font-size:11px;line-height:13px;letter-spacing:-0.388px;">...</div>
<div class="a" style="left:32px;top:506px;width:182px;height:1px;background:#ebebeb"></div>
<div class="t" style="left:36px;top:508.69px;font-size:11px;line-height:13px;letter-spacing:-0.322px;">Seismic Code</div>
<div class="t" style="left:128.3px;top:508.69px;font-size:11px;line-height:13px;letter-spacing:-0.242px;">ASCE 7-10 Gro...</div>
<div class="a" style="left:32px;top:523px;width:182px;height:1px;background:#ebebeb"></div>
<div class="t" style="left:36px;top:525.69px;font-size:11px;line-height:13px;letter-spacing:-0.228px;">Orientation</div>
<div class="t" style="left:128.3px;top:525.69px;font-size:11px;line-height:13px;letter-spacing:-0.252px;">Horizontal</div>
<div class="a" style="left:200px;top:527px;width:12px;height:11px;background:linear-gradient(#e9eaf3,#c1c2d4)"><div class="a" style="left:2.500px;top:4px;border:3.500px solid transparent;border-top:4px solid #000;border-bottom:0"></div></div>
<div class="a" style="left:32px;top:540px;width:182px;height:1px;background:#ebebeb"></div>
<div class="t" style="left:36px;top:542.69px;font-size:11px;line-height:13px;letter-spacing:-0.199px;">Apply Standard...</div>
<div class="cb" style="left:162px;top:542px"></div><svg style="left:164px;top:544px" width="9" height="9" viewBox="0 0 9 9"><path d="M1 4l2.500 3L8 1" fill="none" stroke="#2b3f8f" stroke-width="1.900"/></svg>
<div class="a" style="left:32px;top:557px;width:182px;height:1px;background:#ebebeb"></div>
<div class="t" style="left:36px;top:559.69px;font-size:11px;line-height:13px;letter-spacing:-0.100px;">Data Set</div>
<div class="t" style="left:128.3px;top:559.69px;font-size:11px;line-height:13px;letter-spacing:-0.162px;">API 660</div>
<div class="a" style="left:200px;top:561px;width:12px;height:11px;background:linear-gradient(#e9eaf3,#c1c2d4)"><div class="a" style="left:2.500px;top:4px;border:3.500px solid transparent;border-top:4px solid #000;border-bottom:0"></div></div>
<div class="a" style="left:32px;top:574px;width:182px;height:1px;background:#ebebeb"></div>
<div class="t" style="left:36px;top:576.69px;font-size:11px;line-height:13px;letter-spacing:-0.239px;">Nozzle Load Cl...</div>
<div class="t" style="left:128.3px;top:576.69px;font-size:11px;line-height:13px;letter-spacing:-0.117px;">150</div>
<div class="a" style="left:200px;top:578px;width:12px;height:11px;background:linear-gradient(#e9eaf3,#c1c2d4)"><div class="a" style="left:2.500px;top:4px;border:3.500px solid transparent;border-top:4px solid #000;border-bottom:0"></div></div>
<div class="a" style="left:32px;top:591px;width:182px;height:1px;background:#ebebeb"></div>
<div class="a" style="left:31px;top:638px;width:184px;height:23px;background:linear-gradient(90deg,#fbfbfb,#f1f1f1 35%,#e3e3e3 60%,#e3e3e3)"></div>
<div class="t" style="left:34px;top:644.02px;font-size:11.5px;line-height:14px;font-weight:bold;letter-spacing:-0.380px;">Design Requirements</div>
<div class="a" style="left:199px;top:646px;border:3.500px solid transparent;border-bottom:4px solid #000;border-top:0"></div>
<div class="a" style="left:31px;top:661px;width:184px;height:328px;background:#fff"></div>
<div class="a" style="left:123px;top:661px;width:1px;height:328px;background:#ececec"></div>
<div class="a" style="left:31px;top:661px;width:184px;height:17px;background:#efefef;border-bottom:1px solid #e0e0e0"></div>
<div class="a" style="left:160px;top:679px;width:1px;height:309px;background:#ececec"></div>
<div class="a" style="left:123px;top:661px;width:1px;height:328px;background:#fff"></div>
<div class="a" style="left:36px;top:665px;width:9px;height:9px;border:1px solid #8c8c8c;background:#fff"></div>
<div class="a" style="left:38px;top:669px;width:5px;height:1px;background:#444"></div><div class="a" style="left:40px;top:667px;width:1px;height:5px;background:#444"></div>
<div class="t" style="left:53px;top:663.02px;font-size:11.5px;line-height:14px;font-weight:bold;color:#808080;letter-spacing:0.069px;">Unsupported</div>
<!-- sec_view -->
<div class="a" style="left:226px;top:70px;width:1436px;height:948px;background:#f4f5fb"></div>
<div class="a" style="left:227px;top:70px;width:2px;height:948px;background:#fff"></div>
<div class="a" style="left:230px;top:70px;width:1429px;height:924px;background:#fff;border-left:2px solid #7d7d7d;border-right:1px solid #a2a2a2;border-bottom:1px solid #9a9a9a;border-top:1px solid #d0d0d0"></div><div class="a" style="left:230px;top:72px;width:1425px;height:2px;background:#737676"></div>
<div class="a" style="left:232px;top:74px;width:1421px;height:24px;background:linear-gradient(#fff 0,#f7f8fc 40%,#dddfeb 75%,#b9bbcf 100%)"></div>
<div class="t" style="left:237.5px;top:78.02px;font-size:11.5px;line-height:14px;letter-spacing:0.378px;">Insulation</div>
<div class="t" style="left:299px;top:78.02px;font-size:11.5px;line-height:14px;letter-spacing:0.450px;">Wind</div>
<div class="t" style="left:336px;top:78.02px;font-size:11.5px;line-height:14px;letter-spacing:-0.393px;">Seismic</div>
<div class="t" style="left:382px;top:78.02px;font-size:11.5px;line-height:14px;letter-spacing:-0.114px;">Liquid Level</div>
<div class="t" style="left:451px;top:78.02px;font-size:11.5px;line-height:14px;letter-spacing:-0.406px;">Long Seams</div>
<div class="t" style="left:521px;top:78.02px;font-size:11.5px;line-height:14px;letter-spacing:-0.088px;">Vertical Loads</div>
<div class="a" style="left:234px;top:98px;width:1418px;height:891px;background:#4568a6"></div>
<div class="a" style="left:227px;top:995px;width:1436px;height:22px;background:#f0f0f0"></div>
<svg style="left:232px;top:1000px" width="8" height="12" viewBox="0 0 8 12"><path d="M7 1.500L1.500 6 7 10.500z" fill="none" stroke="#000" stroke-width="1.200"/></svg>
<svg style="left:1639px;top:1000px" width="8" height="12" viewBox="0 0 8 12"><path d="M1 1.500L6.500 6 1 10.500z" fill="none" stroke="#000" stroke-width="1.200"/></svg>
<svg style="left:243px;top:993px" width="112" height="23" viewBox="0 0 112 23"><path d="M0 .5C8 .5 10 4 14 10S21 21.500 28 21.500H107.500Q110.500 21.500 110.500 18.500V.5" fill="#fff" stroke="#8a8a8a" stroke-width="1"/><path d="M0 0H111" stroke="#fff" stroke-width="2"/></svg>
<svg style="left:274px;top:997px" width="13" height="15" viewBox="0 0 13 15"><path d="M.5.5h8l3.500 3.500v10.500H.5z" fill="#fff" stroke="#222"/><path d="M8.500.5V4H12" fill="none" stroke="#222" stroke-width=".8"/><path d="M6 3.500v7.500M4 6h4M3.500 11.500h6" stroke="#222" stroke-width="1.100"/></svg>
<div class="t" style="left:298px;top:998.19px;font-size:11px;line-height:13px;font-weight:bold;letter-spacing:-0.071px;">C-119</div>
<svg style="left:337px;top:1000px" width="9" height="9" viewBox="0 0 9 9"><path d="M1 1l7 7M8 1L1 8" stroke="#000" stroke-width="1.500"/></svg>
<!-- sec_model -->
<svg style="left:234px;top:98px" width="1418" height="891" viewBox="234 98 1418 891" font-family="Liberation Sans, sans-serif">
<defs><linearGradient id="gShell" gradientUnits="userSpaceOnUse" x1="921.6" y1="434.7" x2="978.4" y2="651.3"><stop offset="0" stop-color="#cfd1d8"/><stop offset="0.07" stop-color="#c8cad2"/><stop offset="0.25" stop-color="#bfc1c9"/><stop offset="0.5" stop-color="#b4b6bf"/><stop offset="0.75" stop-color="#a7a9b4"/><stop offset="0.92" stop-color="#999ba6"/><stop offset="1" stop-color="#9193a0"/></linearGradient><linearGradient id="gCone" gradientUnits="userSpaceOnUse" x1="660.7" y1="504.9" x2="711.3" y2="721.1"><stop offset="0" stop-color="#e4e5eb"/><stop offset="0.18" stop-color="#eeeef3"/><stop offset="0.4" stop-color="#dedfe6"/><stop offset="0.65" stop-color="#c8cad3"/><stop offset="0.85" stop-color="#afb1bb"/><stop offset="1" stop-color="#9a9ca6"/></linearGradient><linearGradient id="gCh" gradientUnits="userSpaceOnUse" x1="500.2" y1="605.0" x2="539.8" y2="764.1"><stop offset="0" stop-color="#d0d2db"/><stop offset="0.2" stop-color="#dcdee6"/><stop offset="0.45" stop-color="#cfd1db"/><stop offset="0.75" stop-color="#b4b6c1"/><stop offset="1" stop-color="#9a9ca7"/></linearGradient><linearGradient id="gRch" gradientUnits="userSpaceOnUse" x1="1369.7" y1="376.9" x2="1410.3" y2="539.9"><stop offset="0" stop-color="#c3c6d1"/><stop offset="0.2" stop-color="#d2d5de"/><stop offset="0.45" stop-color="#c8cad4"/><stop offset="0.75" stop-color="#acaeb8"/><stop offset="1" stop-color="#9496a0"/></linearGradient><linearGradient id="gRim" gradientUnits="userSpaceOnUse" x1="414.3" y1="612.3" x2="467.7" y2="798.7"><stop offset="0" stop-color="#d6d6d8"/><stop offset="0.5" stop-color="#cbcbce"/><stop offset="1" stop-color="#b6b6ba"/></linearGradient><linearGradient id="gRing" gradientUnits="userSpaceOnUse" x1="585.5" y1="557.6" x2="636.5" y2="762.4"><stop offset="0" stop-color="#d3d1cb"/><stop offset="0.6" stop-color="#cfcdc7"/><stop offset="1" stop-color="#bfbdb8"/></linearGradient><linearGradient id="gRingR" gradientUnits="userSpaceOnUse" x1="1251.6" y1="383.8" x2="1303.4" y2="591.4"><stop offset="0" stop-color="#d3d1cb"/><stop offset="0.6" stop-color="#cecdc7"/><stop offset="1" stop-color="#c4c2bc"/></linearGradient><linearGradient id="gOr" gradientUnits="userSpaceOnUse" x1="559.3" y1="576.5" x2="592.7" y2="765.5"><stop offset="0" stop-color="#f0aa60"/><stop offset="0.6" stop-color="#eca258"/><stop offset="1" stop-color="#d8904a"/></linearGradient><linearGradient id="gOrR" gradientUnits="userSpaceOnUse" x1="1279.6" y1="378.6" x2="1330.4" y2="582.4"><stop offset="0" stop-color="#f0ac64"/><stop offset="0.55" stop-color="#eba459"/><stop offset="0.85" stop-color="#d9924b"/><stop offset="1" stop-color="#c98442"/></linearGradient><linearGradient id="gCream" gradientUnits="userSpaceOnUse" x1="549.3" y1="579.1" x2="582.7" y2="768.1"><stop offset="0" stop-color="#f4f1dc"/><stop offset="0.6" stop-color="#efecd5"/><stop offset="1" stop-color="#e2dfc6"/></linearGradient><linearGradient id="gR2" gradientUnits="userSpaceOnUse" x1="1293.6" y1="375.1" x2="1344.4" y2="578.9"><stop offset="0" stop-color="#c8c9cd"/><stop offset="0.45" stop-color="#c2c3c8"/><stop offset="0.8" stop-color="#a3a5ab"/><stop offset="1" stop-color="#8d8f96"/></linearGradient><linearGradient id="gDark" gradientUnits="userSpaceOnUse" x1="1257.4" y1="407.1" x2="1297.6" y2="568.1"><stop offset="0" stop-color="#868890"/><stop offset="0.3" stop-color="#9b9da3"/><stop offset="0.6" stop-color="#9d9fa5"/><stop offset="1" stop-color="#85878d"/></linearGradient><linearGradient id="gRf" gradientUnits="userSpaceOnUse" x1="1406.2" y1="354.8" x2="1455.8" y2="540.2"><stop offset="0" stop-color="#f0edd8"/><stop offset="0.5" stop-color="#ebe8d0"/><stop offset="1" stop-color="#d8d5bc"/></linearGradient><linearGradient id="gKn" gradientUnits="userSpaceOnUse" x1="1240" y1="480" x2="1284" y2="470"><stop offset="0" stop-color="#70727a" stop-opacity="0"/><stop offset="1" stop-color="#70727a" stop-opacity=".5"/></linearGradient><linearGradient id="bore" x1="0" y1="0" x2="1" y2="0"><stop offset="0" stop-color="#8f8c77"/><stop offset=".45" stop-color="#c4c1ab"/><stop offset="1" stop-color="#efecda"/></linearGradient><linearGradient id="gN" x1="0" y1="0" x2="1" y2="0"><stop offset="0" stop-color="#bcb8a2"/><stop offset=".38" stop-color="#e8e5d4"/><stop offset=".7" stop-color="#d6d3bf"/><stop offset="1" stop-color="#aeaa95"/></linearGradient><linearGradient id="gNv" x1="0" y1="0" x2="0" y2="1"><stop offset="0" stop-color="#f3f0e2"/><stop offset=".5" stop-color="#e4e1cd"/><stop offset="1" stop-color="#c5c1aa"/></linearGradient></defs>
<path d="M1447.500 98V350" stroke="#e0142a" stroke-width="2" fill="none"/>
<path d="M1514 461L1652 497" stroke="#e0142a" stroke-width="2" fill="none"/>
<path d="M234 757L299 740.500" stroke="#e0142a" stroke-width="2" fill="none"/>
<path d="M1363.9 431.5L1363.9 423.5L1364.5 415.6L1365.6 408.0L1367.2 400.7L1369.3 393.8L1371.8 387.2L1374.8 381.1L1378.3 375.6L1382.1 370.5L1386.3 366.1L1390.8 362.3L1395.7 359.1L1400.8 356.6L1406.2 354.8L1436.2 347.0L1441.7 345.9L1447.4 345.5L1453.2 345.8L1459.0 346.8L1464.9 348.6L1470.7 351.0L1476.4 354.1L1482.1 357.9L1487.6 362.3L1492.8 367.3L1497.9 372.8L1502.6 378.9L1507.1 385.4L1511.1 392.3L1514.8 399.6L1518.1 407.1L1521.0 415.0L1523.4 423.0L1525.3 431.1L1526.8 439.3L1527.7 447.6L1528.1 455.7L1528.1 463.7L1527.5 471.6L1526.4 479.2L1524.8 486.5L1522.7 493.4L1520.2 500.0L1517.2 506.1L1513.7 511.6L1509.9 516.7L1505.7 521.1L1501.2 524.9L1496.3 528.1L1491.2 530.6L1485.8 532.4L1455.8 540.2L1450.3 541.3L1444.6 541.7L1438.8 541.4L1433.0 540.4L1427.1 538.6L1421.3 536.2L1415.6 533.0L1409.9 529.3L1404.4 524.9L1399.2 519.9L1394.1 514.4L1389.4 508.4L1384.9 501.8L1380.9 494.9L1377.2 487.6L1373.9 480.1L1371.0 472.2L1368.6 464.2L1366.7 456.1L1365.2 447.9L1364.3 439.6Z" fill="url(#gRf)"/>
<ellipse cx="1461.0" cy="439.7" rx="64.6" ry="96.0" transform="rotate(-15.0 1461.0 439.7)" fill="none"/>
<ellipse cx="1431.0" cy="447.5" rx="64.6" ry="96.0" transform="rotate(-15.0 1431.0 447.5)" fill="#f1eedb"/>
<g fill="#f4f2e4" stroke="#000" stroke-width="1.5"><circle cx="1488.9" cy="431.9" r="3.3"/><circle cx="1491.2" cy="442.4" r="3.3"/><circle cx="1492.7" cy="452.9" r="3.3"/><circle cx="1493.3" cy="463.4" r="3.3"/><circle cx="1492.9" cy="473.6" r="3.3"/><circle cx="1491.7" cy="483.5" r="3.3"/><circle cx="1489.6" cy="492.8" r="3.3"/><circle cx="1486.6" cy="501.5" r="3.3"/><circle cx="1482.8" cy="509.3" r="3.3"/><circle cx="1478.3" cy="516.3" r="3.3"/><circle cx="1473.1" cy="522.3" r="3.3"/><circle cx="1467.2" cy="527.2" r="3.3"/><circle cx="1460.8" cy="530.9" r="3.3"/><circle cx="1454.0" cy="533.4" r="3.3"/><circle cx="1446.9" cy="534.6" r="3.3"/><circle cx="1439.5" cy="534.6" r="3.3"/><circle cx="1432.0" cy="533.3" r="3.3"/><circle cx="1424.5" cy="530.7" r="3.3"/><circle cx="1417.1" cy="527.0" r="3.3"/><circle cx="1409.9" cy="522.0" r="3.3"/><circle cx="1403.0" cy="516.0" r="3.3"/><circle cx="1396.5" cy="509.0" r="3.3"/><circle cx="1390.5" cy="501.1" r="3.3"/><circle cx="1385.1" cy="492.4" r="3.3"/><circle cx="1380.3" cy="483.0" r="3.3"/><circle cx="1376.3" cy="473.2" r="3.3"/><circle cx="1373.1" cy="462.9" r="3.3"/><circle cx="1370.8" cy="452.4" r="3.3"/><circle cx="1369.3" cy="441.9" r="3.3"/><circle cx="1368.7" cy="431.4" r="3.3"/><circle cx="1369.1" cy="421.2" r="3.3"/><circle cx="1370.3" cy="411.3" r="3.3"/><circle cx="1372.4" cy="402.0" r="3.3"/><circle cx="1375.4" cy="393.3" r="3.3"/><circle cx="1379.2" cy="385.5" r="3.3"/><circle cx="1383.7" cy="378.5" r="3.3"/><circle cx="1388.9" cy="372.5" r="3.3"/><circle cx="1394.8" cy="367.6" r="3.3"/><circle cx="1401.2" cy="363.9" r="3.3"/><circle cx="1408.0" cy="361.4" r="3.3"/><circle cx="1415.1" cy="360.2" r="3.3"/><circle cx="1422.5" cy="360.2" r="3.3"/><circle cx="1430.0" cy="361.5" r="3.3"/><circle cx="1437.5" cy="364.1" r="3.3"/><circle cx="1444.9" cy="367.8" r="3.3"/><circle cx="1452.1" cy="372.8" r="3.3"/><circle cx="1459.0" cy="378.8" r="3.3"/><circle cx="1465.5" cy="385.8" r="3.3"/><circle cx="1471.5" cy="393.7" r="3.3"/><circle cx="1476.9" cy="402.4" r="3.3"/><circle cx="1481.7" cy="411.8" r="3.3"/><circle cx="1485.7" cy="421.6" r="3.3"/></g>
<path d="M1447.4 345.5L1449.2 345.5L1451.1 345.6L1452.9 345.8L1454.8 346.0L1456.6 346.3L1458.5 346.7L1460.4 347.2L1462.3 347.7L1464.1 348.3L1466.0 349.0L1467.9 349.8L1469.7 350.6L1471.6 351.5L1473.4 352.4L1475.3 353.4L1477.1 354.5L1478.9 355.7L1480.7 356.9L1482.5 358.2L1484.2 359.6L1486.0 361.0L1487.7 362.4L1489.4 364.0L1491.1 365.6L1492.8 367.2L1494.4 368.9L1496.0 370.7L1497.6 372.5L1499.2 374.4L1500.7 376.3L1502.2 378.2L1503.6 380.3L1505.1 382.3L1506.5 384.4L1507.8 386.6L1509.1 388.8L1510.4 391.0L1511.7 393.3L1512.9 395.6L1514.1 397.9L1515.2 400.3L1516.3 402.7L1517.3 405.1L1518.3 407.6L1519.3 410.0L1520.2 412.5L1521.0 415.1L1521.9 417.6L1522.6 420.2L1523.3 422.8L1524.0 425.3L1524.6 427.9L1525.2 430.6L1525.7 433.2L1526.2 435.8L1526.6 438.4L1527.0 441.0L1527.3 443.7L1527.6 446.3L1527.8 448.9L1528.0 451.5L1528.1 454.1L1528.2 456.7L1528.2 459.3L1528.1 461.9L1528.0 464.4L1527.9 466.9L1527.7 469.4L1527.4 471.9L1527.1 474.4L1526.8 476.8L1526.4 479.2" stroke="#fbfaf0" stroke-width="1.600" fill="none" opacity=".9"/>
<path d="M1514 461L1652 497M1447.500 338V350" stroke="#e0142a" stroke-width="2" fill="none"/>
<path d="M1360 538V572Q1356 575 1350 577L1350 586H1417V577Q1412 575 1411 571V538Z" fill="url(#gN)"/>
<path d="M1349 578a34.500 7 0 0 0 69 0l1 8h-71z" fill="#e4e1cc"/>
<path d="M1331 586v6a50 11.500 0 0 0 100 0v-6z" fill="#cfcbb4"/>
<ellipse cx="1381" cy="586" rx="50" ry="11.500" fill="#ebe8d5"/>
<path d="M1349 579a34.500 7 0 0 0 69 0a34.500 9 0 0 1 -69 0z" fill="#e6e3cf"/>
<path d="M1350 576V581a33.500 7 0 0 0 67 0V576z" fill="url(#gN)"/>
<rect x="1419.9" y="583.7" width="3" height="1.500" fill="#111"/>
<rect x="1422.8" y="586.0" width="3" height="1.500" fill="#111"/>
<rect x="1422.3" y="588.3" width="3" height="1.500" fill="#111"/>
<rect x="1418.5" y="590.5" width="3" height="1.500" fill="#111"/>
<rect x="1411.7" y="592.4" width="3" height="1.500" fill="#111"/>
<rect x="1402.5" y="593.8" width="3" height="1.500" fill="#111"/>
<rect x="1391.4" y="594.8" width="3" height="1.500" fill="#111"/>
<rect x="1379.5" y="595.1" width="3" height="1.500" fill="#111"/>
<rect x="1367.6" y="594.8" width="3" height="1.500" fill="#111"/>
<rect x="1356.5" y="593.8" width="3" height="1.500" fill="#111"/>
<rect x="1347.3" y="592.4" width="3" height="1.500" fill="#111"/>
<rect x="1340.5" y="590.5" width="3" height="1.500" fill="#111"/>
<rect x="1336.7" y="588.3" width="3" height="1.500" fill="#111"/>
<rect x="1336.2" y="586.0" width="3" height="1.500" fill="#111"/>
<rect x="1339.1" y="583.7" width="3" height="1.500" fill="#111"/>
<rect x="1379" y="367" width="6.500" height="18" rx="2" fill="url(#gN)"/>
<path d="M1231.7 461.8L1231.9 453.0L1232.7 444.4L1234.1 436.1L1236.0 428.1L1238.4 420.6L1241.3 413.5L1244.8 406.9L1248.6 400.8L1252.9 395.4L1257.6 390.6L1262.7 386.5L1268.0 383.1L1273.7 380.5L1279.6 378.6L1293.6 375.1L1299.7 374.0L1305.9 373.7L1312.3 374.1L1318.7 375.4L1325.0 377.4L1331.4 380.2L1337.6 383.7L1343.8 387.9L1349.7 392.8L1355.3 398.4L1360.8 404.5L1365.9 411.2L1370.6 418.4L1374.9 426.0L1378.8 434.1L1382.3 442.4L1385.3 451.0L1387.8 459.9L1389.7 468.8L1391.1 477.8L1392.0 486.8L1392.3 495.7L1392.1 504.5L1391.3 513.1L1389.9 521.4L1388.0 529.4L1385.6 536.9L1382.7 544.0L1379.2 550.6L1375.4 556.7L1371.1 562.1L1366.4 566.9L1361.3 571.0L1356.0 574.4L1350.3 577.0L1344.4 578.9L1330.4 582.4L1324.3 583.5L1318.1 583.8L1311.7 583.4L1305.3 582.1L1299.0 580.1L1292.6 577.3L1286.4 573.8L1280.2 569.6L1274.3 564.7L1268.7 559.1L1263.2 553.0L1258.1 546.3L1253.4 539.1L1249.1 531.5L1245.2 523.4L1241.7 515.1L1238.7 506.5L1236.2 497.6L1234.3 488.7L1232.9 479.7L1232.0 470.7Z" fill="#c3c4c8"/>
<path d="M1208.3 467.1L1208.5 458.2L1209.4 449.4L1210.8 441.0L1212.7 432.9L1215.1 425.1L1218.1 417.9L1221.6 411.2L1225.5 405.0L1229.9 399.5L1234.7 394.6L1239.9 390.4L1245.3 387.0L1251.1 384.3L1257.1 382.4L1263.3 381.2L1285.7 377.5L1291.9 377.2L1298.3 377.6L1304.7 378.9L1311.0 380.9L1317.4 383.7L1323.6 387.2L1329.8 391.4L1335.7 396.3L1341.3 401.9L1346.8 408.0L1351.9 414.7L1356.6 421.9L1360.9 429.5L1364.8 437.6L1368.3 445.9L1371.3 454.5L1373.8 463.4L1375.7 472.3L1377.1 481.3L1378.0 490.3L1378.3 499.2L1378.1 508.0L1377.3 516.6L1375.9 524.9L1374.0 532.9L1371.6 540.4L1368.7 547.5L1365.2 554.1L1361.4 560.2L1357.1 565.6L1352.4 570.4L1347.3 574.5L1342.0 577.9L1336.3 580.5L1314.9 588.1L1308.9 590.0L1302.7 591.1L1296.3 591.5L1289.9 591.0L1283.4 589.7L1276.8 587.7L1270.4 584.9L1264.0 581.3L1257.8 577.0L1251.8 572.0L1246.0 566.3L1240.4 560.1L1235.2 553.2L1230.4 545.9L1226.0 538.1L1222.0 530.0L1218.5 521.4L1215.4 512.6L1212.9 503.7L1210.9 494.6L1209.5 485.4L1208.6 476.2Z" fill="url(#gOrR)"/>
<path d="M1260.7 461.9L1260.9 454.9L1261.5 448.1L1262.6 441.5L1264.1 435.2L1266.0 429.2L1268.4 423.5L1271.1 418.3L1274.2 413.5L1277.6 409.1L1281.3 405.4L1285.3 402.1L1289.6 399.4L1294.1 397.3L1298.8 395.8L1409.5 367.5L1414.3 366.6L1419.2 366.2L1424.2 366.5L1429.3 367.4L1434.3 368.9L1439.4 371.0L1444.3 373.7L1449.2 377.0L1454.0 380.8L1458.5 385.1L1462.9 389.9L1467.0 395.1L1470.8 400.7L1474.3 406.7L1477.6 413.0L1480.4 419.5L1482.9 426.3L1485.0 433.2L1486.6 440.3L1487.9 447.4L1488.7 454.5L1489.0 461.5L1489.0 468.5L1488.5 475.3L1487.5 481.8L1486.1 488.2L1484.3 494.2L1482.1 499.8L1479.5 505.1L1476.6 509.9L1473.3 514.2L1469.6 518.1L1465.7 521.4L1461.5 524.1L1457.1 526.3L1452.5 527.9L1339.2 557.8L1334.4 558.7L1329.4 559.0L1324.4 558.6L1319.3 557.6L1314.2 556.0L1309.2 553.8L1304.2 551.0L1299.3 547.6L1294.6 543.8L1290.1 539.3L1285.8 534.5L1281.7 529.1L1278.0 523.4L1274.5 517.3L1271.4 511.0L1268.7 504.3L1266.3 497.5L1264.3 490.5L1262.8 483.3L1261.6 476.2L1261.0 469.0Z" fill="url(#gRch)"/>
<path d="M1231.7 461.8L1231.9 453.0L1232.7 444.4L1234.1 436.1L1236.0 428.1L1238.4 420.6L1241.3 413.5L1244.8 406.9L1248.6 400.8L1252.9 395.4L1257.6 390.6L1262.7 386.5L1268.0 383.1L1273.7 380.5L1279.6 378.6L1293.6 375.1L1299.7 374.0L1305.9 373.7L1312.3 374.1L1318.7 375.4L1325.0 377.4L1331.4 380.2L1337.6 383.7L1343.8 387.9L1349.7 392.8L1355.3 398.4L1360.8 404.5L1365.9 411.2L1370.6 418.4L1374.9 426.0L1378.8 434.1L1382.3 442.4L1385.3 451.0L1387.8 459.9L1389.7 468.8L1391.1 477.8L1392.0 486.8L1392.3 495.7L1392.1 504.5L1391.3 513.1L1389.9 521.4L1388.0 529.4L1385.6 536.9L1382.7 544.0L1379.2 550.6L1375.4 556.7L1371.1 562.1L1366.4 566.9L1361.3 571.0L1356.0 574.4L1350.3 577.0L1344.4 578.9L1330.4 582.4L1324.3 583.5L1318.1 583.8L1311.7 583.4L1305.3 582.1L1299.0 580.1L1292.6 577.3L1286.4 573.8L1280.2 569.6L1274.3 564.7L1268.7 559.1L1263.2 553.0L1258.1 546.3L1253.4 539.1L1249.1 531.5L1245.2 523.4L1241.7 515.1L1238.7 506.5L1236.2 497.6L1234.3 488.7L1232.9 479.7L1232.0 470.7Z" fill="url(#gR2)"/>
<path d="M1208.3 467.1L1208.5 458.2L1209.4 449.4L1210.8 441.0L1212.7 432.9L1215.1 425.1L1218.1 417.9L1221.6 411.2L1225.5 405.0L1229.9 399.5L1234.7 394.6L1239.9 390.4L1245.3 387.0L1251.1 384.3L1257.1 382.4L1263.3 381.2L1285.7 377.5L1291.9 377.2L1298.3 377.6L1304.7 378.9L1311.0 380.9L1317.4 383.7L1323.6 387.2L1329.8 391.4L1335.7 396.3L1341.3 401.9L1346.8 408.0L1351.9 414.7L1356.6 421.9L1360.9 429.5L1364.8 437.6L1368.3 445.9L1371.3 454.5L1373.8 463.4L1375.7 472.3L1377.1 481.3L1378.0 490.3L1378.3 499.2L1378.1 508.0L1377.3 516.6L1375.9 524.9L1374.0 532.9L1371.6 540.4L1368.7 547.5L1365.2 554.1L1361.4 560.2L1357.1 565.6L1352.4 570.4L1347.3 574.5L1342.0 577.9L1336.3 580.5L1314.9 588.1L1308.9 590.0L1302.7 591.1L1296.3 591.5L1289.9 591.0L1283.4 589.7L1276.8 587.7L1270.4 584.9L1264.0 581.3L1257.8 577.0L1251.8 572.0L1246.0 566.3L1240.4 560.1L1235.2 553.2L1230.4 545.9L1226.0 538.1L1222.0 530.0L1218.5 521.4L1215.4 512.6L1212.9 503.7L1210.9 494.6L1209.5 485.4L1208.6 476.2Z" fill="url(#gOrR)"/>
<path d="M1202.8 468.5L1203.0 459.6L1203.9 450.8L1205.2 442.4L1207.2 434.2L1209.6 426.5L1212.6 419.3L1216.1 412.6L1220.0 406.4L1224.4 400.9L1229.2 396.0L1234.4 391.8L1239.8 388.4L1245.6 385.7L1251.6 383.8L1257.1 382.4L1263.3 381.2L1269.7 380.9L1276.1 381.4L1282.6 382.7L1289.2 384.7L1295.6 387.6L1302.0 391.1L1308.2 395.4L1314.2 400.4L1320.0 406.1L1325.6 412.3L1330.8 419.2L1335.6 426.5L1340.0 434.3L1344.0 442.4L1347.5 451.0L1350.6 459.8L1353.1 468.7L1355.1 477.8L1356.5 487.0L1357.4 496.2L1357.7 505.3L1357.5 514.2L1356.6 523.0L1355.2 531.4L1353.3 539.5L1350.9 547.3L1347.9 554.5L1344.4 561.2L1340.5 567.4L1336.1 572.9L1331.3 577.8L1326.1 582.0L1320.7 585.4L1314.9 588.1L1308.9 590.0L1303.4 591.4L1297.2 592.5L1290.8 592.9L1284.4 592.4L1277.9 591.1L1271.3 589.1L1264.9 586.2L1258.5 582.7L1252.3 578.4L1246.2 573.4L1240.5 567.7L1234.9 561.5L1229.8 554.6L1224.9 547.3L1220.5 539.5L1216.5 531.4L1213.0 522.8L1209.9 514.0L1207.4 505.1L1205.4 496.0L1204.0 486.8L1203.1 477.6Z" fill="#c2c0ba"/>
<ellipse cx="1277.5" cy="487.6" rx="72.2" ry="107.0" transform="rotate(-14.0 1277.5 487.6)" fill="url(#gRingR)"/>
<path d="M1148.9 455.6L1149.2 446.9L1150.0 438.4L1151.4 430.1L1153.3 422.2L1155.7 414.7L1158.6 407.7L1162.0 401.1L1165.9 395.2L1170.2 389.8L1174.9 385.0L1179.9 381.0L1185.3 377.6L1191.0 375.0L1196.8 373.1L1202.9 372.0L1209.1 371.6L1215.5 372.1L1221.8 373.3L1228.2 375.3L1234.5 378.1L1240.8 381.5L1292.5 413.8L1297.3 417.1L1302.0 421.0L1306.5 425.4L1310.8 430.2L1314.9 435.5L1318.7 441.2L1322.1 447.2L1325.2 453.6L1327.9 460.2L1330.3 467.0L1332.3 473.9L1333.8 481.0L1334.9 488.1L1335.6 495.3L1335.8 502.3L1335.6 509.3L1335.0 516.0L1333.9 522.6L1332.4 528.9L1330.4 534.9L1328.1 540.5L1325.4 545.7L1322.3 550.5L1318.8 554.8L1315.1 558.6L1311.1 561.9L1306.8 564.5L1302.3 566.6L1297.6 568.1L1292.7 569.0L1241.1 576.0L1234.9 576.4L1228.5 575.9L1222.2 574.7L1215.8 572.7L1209.5 570.0L1203.2 566.5L1197.2 562.3L1191.3 557.5L1185.6 552.0L1180.2 545.9L1175.2 539.3L1170.4 532.1L1166.1 524.6L1162.2 516.6L1158.8 508.4L1155.8 499.8L1153.4 491.1L1151.5 482.2L1150.0 473.3L1149.2 464.4Z" fill="url(#gDark)"/>
<path d="M1248.2 410.7L1250.4 409.5L1252.7 408.6L1255.1 407.7L1257.4 407.1L1259.8 406.5L1262.3 406.2L1264.7 406.0L1267.2 405.9L1269.7 406.0L1272.3 406.3L1274.8 406.7L1277.4 407.3L1279.9 408.0L1282.4 408.8L1285.0 409.9L1287.5 411.0L1290.0 412.3L1292.5 413.8L1294.9 415.4L1297.3 417.1L1299.7 419.0L1302.0 421.0L1304.3 423.1L1306.5 425.4L1308.7 427.7L1310.8 430.2L1312.9 432.8L1314.9 435.5L1316.8 438.3L1318.6 441.2L1320.4 444.2L1322.1 447.2L1323.7 450.4L1325.2 453.6L1326.6 456.8L1327.9 460.2L1329.2 463.6L1330.3 467.0L1331.3 470.4L1332.3 473.9L1333.1 477.5L1333.8 481.0L1334.4 484.6L1334.9 488.1L1335.3 491.7L1335.6 495.3L1335.8 498.8L1335.8 502.3L1335.8 505.8L1335.6 509.3L1335.3 512.7L1335.0 516.0L1334.5 519.4L1333.9 522.6L1333.2 525.8L1332.4 528.9L1331.4 531.9L1330.4 534.9L1329.3 537.8L1328.1 540.5L1326.8 543.2L1325.4 545.7L1323.9 548.2L1322.3 550.5L1320.6 552.7L1318.8 554.8L1317.0 556.8L1315.1 558.6L1313.1 560.3L1311.1 561.9L1309.0 563.3L1306.8 564.5" stroke="#000" stroke-width="1.300" fill="none"/>
<rect x="804.500" y="688" width="10" height="22" fill="url(#gN)"/><path d="M802.500 710v2.500a9.500 3.500 0 0 0 19 0v-2.500z" fill="#cfcbb4"/><ellipse cx="812" cy="710" rx="9.500" ry="3.500" fill="#efecd9"/>
<path d="M610.0 591.8L610.4 582.6L611.3 573.5L612.8 564.8L614.8 556.4L617.4 548.5L620.5 541.0L624.1 534.1L628.2 527.8L632.8 522.2L637.7 517.2L643.0 513.0L648.6 509.5L654.5 506.8L660.6 504.9L1187.5 371.4L1193.6 370.3L1199.9 370.1L1206.3 370.6L1212.7 371.9L1219.1 373.9L1225.5 376.8L1231.7 380.3L1237.8 384.6L1243.8 389.5L1249.4 395.1L1254.8 401.3L1259.9 408.0L1264.6 415.2L1268.9 422.9L1272.7 431.0L1276.1 439.4L1279.0 448.0L1281.4 456.8L1283.3 465.8L1284.6 474.8L1285.4 483.8L1285.6 492.8L1285.3 501.5L1284.4 510.1L1282.9 518.4L1280.9 526.4L1278.4 533.9L1275.4 541.0L1271.9 547.6L1267.9 553.6L1263.6 559.0L1258.8 563.7L1253.7 567.8L1248.2 571.1L1242.5 573.8L1236.5 575.6L711.4 721.1L705.0 722.1L698.5 722.3L691.9 721.7L685.3 720.3L678.7 718.0L672.1 715.0L665.7 711.2L659.4 706.6L653.3 701.3L647.4 695.3L641.9 688.8L636.6 681.6L631.8 673.9L627.3 665.8L623.4 657.2L619.8 648.3L616.8 639.2L614.4 629.8L612.4 620.3L611.0 610.8L610.2 601.3Z" fill="url(#gShell)"/>
<path d="M1181.5 373.2L1185.3 372.0L1189.1 371.0L1193.0 370.4L1197.0 370.1L1201.0 370.1L1205.0 370.4L1209.1 371.0L1213.1 372.0L1217.2 373.2L1221.3 374.8L1225.3 376.6L1229.3 378.8L1233.2 381.2L1237.0 384.0L1240.8 387.0L1244.5 390.2L1248.1 393.7L1251.6 397.5L1255.0 401.5L1258.2 405.7L1261.3 410.1L1264.3 414.7L1267.0 419.5L1269.7 424.5L1272.1 429.6L1274.4 434.8L1276.4 440.2L1278.3 445.7L1280.0 451.2L1281.4 456.8L1282.7 462.5L1283.7 468.2L1284.5 473.9L1285.1 479.6L1285.5 485.3L1285.6 491.0L1285.5 496.6L1285.2 502.1L1284.7 507.6L1284.0 512.9L1283.0 518.1L1281.8 523.2L1280.4 528.2L1278.8 532.9L1277.0 537.5L1275.0 541.9L1272.8 546.1L1270.4 550.0L1267.8 553.8L1265.1 557.3L1262.2 560.5L1259.1 563.4L1255.9 566.1L1252.6 568.5L1249.1 570.6L1245.6 572.5L1241.9 574.0L1238.1 575.2L1234.3 576.1L1230.4 576.7L1196.4 585.7L1200.3 585.1L1204.1 584.2L1207.9 583.0L1211.6 581.5L1215.1 579.6L1218.6 577.5L1221.9 575.1L1225.1 572.4L1228.2 569.5L1231.1 566.3L1233.8 562.8L1236.4 559.0L1238.8 555.1L1241.0 550.9L1243.0 546.5L1244.8 541.9L1246.4 537.2L1247.8 532.2L1249.0 527.1L1250.0 521.9L1250.7 516.6L1251.2 511.1L1251.5 505.6L1251.6 500.0L1251.5 494.3L1251.1 488.6L1250.5 482.9L1249.7 477.2L1248.7 471.5L1247.4 465.8L1246.0 460.2L1244.3 454.7L1242.4 449.2L1240.4 443.8L1238.1 438.6L1235.7 433.5L1233.0 428.5L1230.3 423.7L1227.3 419.1L1224.2 414.7L1221.0 410.5L1217.6 406.5L1214.1 402.7L1210.5 399.2L1206.8 396.0L1203.0 393.0L1199.2 390.2L1195.3 387.8L1191.3 385.6L1187.3 383.8L1183.2 382.2L1179.1 381.0L1175.1 380.0L1171.0 379.4L1167.0 379.1L1163.0 379.1L1159.0 379.4L1155.1 380.0L1151.3 381.0L1147.5 382.2Z" fill="url(#gKn)"/>
<path d="M1261.8 410.9L1263.1 412.9L1264.4 414.9L1265.6 417.0L1266.8 419.1L1268.0 421.3L1269.1 423.4L1270.2 425.7L1271.3 427.9L1272.4 430.2L1273.4 432.4L1274.3 434.8L1275.3 437.1L1276.2 439.5L1277.0 441.8L1277.8 444.2L1278.6 446.6L1279.3 449.1L1280.0 451.5L1280.7 454.0L1281.3 456.4L1281.9 458.9L1282.5 461.4L1282.9 463.9L1283.4 466.4L1283.8 468.9L1284.2 471.4L1284.5 473.9L1284.8 476.4L1285.1 478.9L1285.3 481.4L1285.4 483.9L1285.5 486.4L1285.6 488.9L1285.6 491.4L1285.6 493.8L1285.6 496.3L1285.5 498.7L1285.3 501.2L1285.1 503.6L1284.9 506.0L1284.6 508.3L1284.3 510.7L1283.9 513.0L1283.5 515.3L1283.1 517.6L1282.6 519.8L1282.1 522.1L1281.5 524.3L1280.9 526.4L1280.3 528.6L1279.6 530.7L1278.8 532.8L1278.1 534.8L1277.3 536.8L1276.4 538.8L1275.5 540.7L1274.6 542.6L1273.7 544.4L1272.7 546.2L1271.7 548.0L1270.6 549.7L1269.5 551.4L1268.4 553.0L1267.2 554.6L1266.0 556.1L1264.8 557.6L1263.5 559.0L1262.2 560.4L1260.9 561.8L1259.5 563.0L1258.2 564.3L1256.8 565.5" stroke="#000" stroke-width="1" fill="none"/>
<path d="M741.4 458.0V486.0A18.8 5.5 0 0 0 779.0 486.0V458.0Z" fill="url(#gN)"/><path d="M735.1 450.0L741.4 458.6A18.8 5.5 0 0 0 779.0 458.6L785.3 450.0Z" fill="#a9a58f"/><path d="M730.6 446.5V450.0A29.6 8.6 0 0 0 789.8 450.0V446.5Z" fill="#cdc9b2"/><ellipse cx="760.2" cy="446.5" rx="29.6" ry="8.6" fill="#e9e6d3"/><ellipse cx="760.2" cy="446.5" rx="22.0" ry="5.5" fill="url(#bore)"/>
<path d="M922.0 410.0V439.5A18.9 5.3 0 0 0 959.8 439.5V410.0Z" fill="url(#gN)"/><path d="M915.7 401.9L922.0 410.5A18.9 5.3 0 0 0 959.8 410.5L966.1 401.9Z" fill="#a9a58f"/><path d="M911.9 398.4V401.9A29.0 8.1 0 0 0 969.9 401.9V398.4Z" fill="#cdc9b2"/><ellipse cx="940.9" cy="398.4" rx="29.0" ry="8.1" fill="#e9e6d3"/><ellipse cx="940.9" cy="398.4" rx="22.0" ry="5.5" fill="url(#bore)"/>
<path d="M1104.0 363.0V391.5A18.0 5.0 0 0 0 1140.0 391.5V363.0Z" fill="url(#gN)"/><path d="M1097.7 355.0L1104.0 363.5A18.0 5.0 0 0 0 1140.0 363.5L1146.3 355.0Z" fill="#a9a58f"/><path d="M1094.0 351.5V355.0A28.0 7.8 0 0 0 1150.0 355.0V351.5Z" fill="#cdc9b2"/><ellipse cx="1122.0" cy="351.5" rx="28.0" ry="7.8" fill="#e9e6d3"/><ellipse cx="1122.0" cy="351.5" rx="21.0" ry="5.2" fill="url(#bore)"/>
<rect x="839" y="434" width="11" height="33" rx="3" fill="url(#gN)"/><ellipse cx="844.500" cy="432.500" rx="11" ry="4" fill="#efecd9"/>
<path d="M1078.0 617.0L1084.0 615.3L1090.0 613.7L1096.0 612.0L1102.0 610.4L1108.0 608.7L1114.0 607.0L1120.0 605.4L1126.0 603.7L1132.0 602.0L1138.0 600.4L1144.0 598.7L1150.0 597.1L1156.0 595.4L1162.0 593.7L1168.0 592.1L1174.0 590.4L1180.0 588.8L1186.0 587.1L1192.0 585.4L1198.0 583.8L1204.0 582.1L1210.0 580.4L1212.0 590.0L1193.0 598.5L1088.0 621.0Z" fill="#8c8e96"/>
<path d="M1088.0 617.8L1090.0 617.4L1092.0 616.9L1094.0 616.5L1096.0 616.1L1098.0 615.6L1100.0 615.2L1102.0 614.8L1104.0 614.4L1106.0 613.9L1108.0 613.5L1110.0 613.1L1112.0 612.7L1114.0 612.2L1116.0 611.8L1118.0 611.4L1120.0 611.0L1122.0 610.5L1124.0 610.1L1126.0 609.7L1128.0 609.3L1130.0 608.8L1132.0 608.4L1134.0 608.0L1136.0 607.6L1138.0 607.1L1140.0 606.7L1142.0 606.3L1144.0 605.8L1146.0 605.4L1148.0 605.0L1150.0 604.6L1152.0 604.1L1154.0 603.7L1156.0 603.3L1158.0 602.9L1160.0 602.4L1162.0 602.0L1164.0 601.6L1166.0 601.2L1168.0 600.7L1170.0 600.3L1172.0 599.9L1174.0 599.5L1176.0 599.0L1178.0 598.6L1180.0 598.2L1182.0 597.8L1184.0 597.3L1186.0 596.9L1188.0 596.5L1190.0 596.0L1192.0 595.6L1194.0 596.4L1196.0 595.2L1198.0 594.1L1200.0 592.9L1202.0 591.8L1204.0 590.6L1206.0 589.0L1208.0 587.1L1210.0 585.2L1212.0 583.3L1214.0 581.4L1216.0 579.5L1218.0 576.7L1220.0 573.9L1222.0 571.2L1224.0 568.4L1226.0 565.2L1228.0 561.5L1230.0 557.8L1232.0 555.0L1234.0 553.0L1236.0 551.0L1238.0 550.6L1240.0 550.2L1242.0 549.8L1244.0 549.3L1246.0 548.9L1248.0 548.5L1250.0 548.1L1252.0 547.7L1254.0 547.2L1256.0 546.8L1258.0 546.4L1260.0 546.0L1260.0 546.0L1259.0 689.0L1235.5 695.5L1088.0 653.0Z" fill="#979a9d"/>
<path d="M1088.0 617.8L1089.0 617.6L1090.0 617.4L1091.0 617.1L1092.0 616.9L1093.0 616.7L1094.0 616.5L1095.0 616.3L1096.0 616.1L1097.0 615.9L1098.0 615.6L1099.0 615.4L1100.0 615.2L1101.0 615.0L1102.0 614.8L1103.0 614.6L1104.0 614.4L1105.0 614.2L1106.0 613.9L1107.0 613.7L1108.0 613.5L1109.0 613.3L1110.0 613.1L1111.0 612.9L1112.0 612.7L1113.0 612.5L1113.0 652.2L1088.0 645.0Z" fill="#a4a7a9"/>
<path d="M1113.0 612.5L1114.0 612.2L1115.0 612.0L1116.0 611.8L1117.0 611.6L1118.0 611.4L1119.0 611.2L1120.0 611.0L1121.0 610.7L1122.0 610.5L1123.0 610.3L1124.0 610.1L1125.0 609.9L1126.0 609.7L1127.0 609.5L1128.0 609.3L1129.0 609.0L1130.0 608.8L1131.0 608.6L1132.0 608.4L1133.0 608.2L1134.0 608.0L1135.0 607.8L1136.0 607.6L1137.0 607.3L1138.0 607.1L1138.0 659.4L1113.0 652.2Z" fill="#949799"/>
<path d="M1138.0 607.1L1139.0 606.9L1140.0 606.7L1141.0 606.5L1142.0 606.3L1143.0 606.1L1144.0 605.8L1145.0 605.6L1146.0 605.4L1147.0 605.2L1148.0 605.0L1149.0 604.8L1150.0 604.6L1151.0 604.4L1152.0 604.1L1153.0 603.9L1154.0 603.7L1155.0 603.5L1156.0 603.3L1157.0 603.1L1158.0 602.9L1159.0 602.7L1160.0 602.4L1161.0 602.2L1162.0 602.0L1163.0 601.8L1164.0 601.6L1165.0 601.4L1166.0 601.2L1167.0 600.9L1168.0 600.7L1169.0 600.5L1170.0 600.3L1171.0 600.1L1172.0 599.9L1173.0 599.7L1174.0 599.5L1175.0 599.2L1176.0 599.0L1177.0 598.8L1178.0 598.6L1179.0 598.4L1180.0 598.2L1181.0 598.0L1182.0 597.8L1183.0 597.5L1184.0 597.3L1184.0 672.6L1138.0 659.4Z" fill="#a0a3a6"/>
<path d="M1184.0 597.3L1185.0 597.1L1186.0 596.9L1187.0 596.7L1188.0 596.5L1189.0 596.3L1190.0 596.0L1191.0 595.8L1192.0 595.6L1193.0 595.4L1194.0 596.4L1195.0 595.8L1196.0 595.2L1197.0 594.7L1198.0 594.1L1199.0 593.5L1200.0 592.9L1201.0 592.3L1202.0 591.8L1203.0 591.2L1204.0 590.6L1205.0 590.0L1206.0 589.0L1207.0 588.1L1208.0 587.1L1209.0 586.2L1210.0 585.2L1211.0 584.3L1212.0 583.3L1213.0 582.4L1214.0 581.4L1215.0 580.5L1216.0 579.5L1217.0 578.1L1218.0 576.7L1219.0 575.3L1220.0 573.9L1221.0 572.6L1222.0 571.2L1223.0 569.8L1224.0 568.4L1225.0 567.0L1226.0 565.2L1227.0 563.3L1228.0 561.5L1229.0 559.7L1230.0 557.8L1231.0 556.0L1231.0 686.2L1184.0 672.6Z" fill="#8f9295"/>
<path d="M1088 645L1088 653L1235.500 695.500L1235.500 687.500Z" fill="#b4b7b9"/>
<path d="M1231 556L1236 551L1260 546L1259 689L1235.500 695.500L1231 694Z" fill="#a9acae"/>
<path d="M1235.500 585V695.500" stroke="#8d9093" stroke-width="1"/>
<path d="M1193 597L1205 590L1216 579.500L1225 567L1231 556L1236 551L1260 546" stroke="#b6b9bc" stroke-width="4" fill="none" stroke-linejoin="round"/>
<path d="M1079.500 622.500L1091 619.500V638H1079.500Z" fill="url(#gN)"/><ellipse cx="1085.500" cy="638.500" rx="13.500" ry="4.500" fill="#e9e6d2"/><path d="M1072 638.500v2.500a13.500 4.500 0 0 0 27 0v-2.500z" fill="#cfcbb4"/><ellipse cx="1085.500" cy="638.500" rx="13.500" ry="4.500" fill="#efecd9"/>
<path d="M776.700 680L777.800 672L807.800 663L803 693L805.500 804.400L780 812Z" fill="#a2a5a8"/>
<path d="M776.700 672L807.800 663L806 674L777 683Z" fill="#96999c"/>
<path d="M633 773L780 812L776.700 680Q770 690 764 694Q742 714 704 723.500L675 730L636 740Z" fill="#8f9296"/>
<path d="M776.700 680Q770 690 764 694Q742 714 704 723.500L675 730" stroke="#b4b6ba" stroke-width="3" fill="none"/>
<path d="M778.500 684V810" stroke="#7d8084" stroke-width="1"/>
<path d="M558.0 645.0L558.3 638.3L558.9 631.8L560.0 625.4L561.5 619.3L563.4 613.5L565.8 608.1L568.4 603.1L571.5 598.5L632.8 522.2L637.7 517.2L643.0 513.0L648.6 509.5L654.5 506.8L660.6 504.9L667.0 503.9L673.5 503.7L680.1 504.3L686.7 505.7L693.3 508.0L699.9 511.0L706.3 514.8L712.6 519.4L718.7 524.7L724.6 530.7L730.1 537.2L735.4 544.4L740.2 552.1L744.7 560.2L748.6 568.8L752.2 577.7L755.2 586.8L757.6 596.2L759.6 605.7L761.0 615.2L761.8 624.7L762.0 634.2L761.6 643.4L760.7 652.5L759.2 661.2L757.2 669.6L754.6 677.5L751.5 685.0L747.9 691.9L743.8 698.2L739.2 703.8L734.3 708.8L729.0 713.0L723.4 716.5L717.5 719.2L711.4 721.1L634.4 736.6L629.6 737.5L624.8 737.8L619.8 737.4L614.9 736.5L609.9 735.0L605.0 732.9L600.1 730.2L595.4 727.0L590.8 723.3L586.4 719.1L582.2 714.5L578.3 709.4L574.6 703.9L571.3 698.1L568.3 692.0L565.6 685.6L563.3 679.1L561.4 672.4L560.0 665.5L558.9 658.7L558.3 651.8Z" fill="url(#gCone)"/>
<path d="M646.3 510.8L649.2 509.2L652.1 507.8L655.1 506.6L658.2 505.6L661.3 504.8L664.4 504.2L667.6 503.8L670.9 503.6L674.1 503.7L677.4 503.9L680.7 504.4L684.0 505.0L687.4 505.9L690.7 507.0L694.0 508.2L697.3 509.7L700.5 511.4L703.8 513.2L707.0 515.3L710.1 517.5L713.3 519.9L716.3 522.5L719.3 525.3L722.3 528.2L725.2 531.3L728.0 534.5L730.7 537.9L733.3 541.5L735.9 545.2L738.3 549.0L740.7 552.9L742.9 556.9L745.1 561.1L747.1 565.3L749.0 569.7L750.8 574.1L752.5 578.6L754.0 583.2L755.4 587.8L756.7 592.4L757.9 597.1L758.9 601.9L759.7 606.6L760.5 611.4L761.1 616.2L761.5 620.9L761.8 625.7L762.0 630.4L762.0 635.1L761.9 639.8L761.6 644.4L761.2 648.9L760.6 653.4L759.9 657.8L759.0 662.1L758.1 666.3L756.9 670.4L755.7 674.4L754.3 678.3L752.8 682.1L751.1 685.7L749.4 689.2L747.5 692.5L745.5 695.7L743.3 698.8L741.1 701.7L738.8 704.4L736.3 706.9L733.8 709.3L731.2 711.4L728.5 713.4L725.7 715.2" stroke="#000" stroke-width="1.800" fill="none"/>
<path d="M536.2 641.5L536.5 632.6L537.3 624.0L538.8 615.6L540.7 607.6L543.2 600.0L546.2 592.9L549.8 586.2L553.7 580.1L558.1 574.6L563.0 569.8L568.1 565.7L573.6 562.2L579.5 559.5L585.5 557.6L588.0 557.0L594.2 555.9L600.6 555.5L607.0 556.0L613.6 557.2L620.1 559.2L626.6 562.0L632.9 565.5L639.1 569.7L645.2 574.6L651.0 580.2L656.5 586.3L661.6 593.0L666.5 600.2L670.9 607.9L674.8 616.0L678.3 624.4L681.3 633.0L683.8 641.9L685.8 650.9L687.2 659.9L688.0 669.0L688.3 677.9L688.0 686.8L687.2 695.4L685.8 703.8L683.8 711.8L681.3 719.4L678.3 726.5L674.7 733.2L670.8 739.3L666.4 744.8L661.5 749.6L656.4 753.7L650.9 757.2L645.0 759.9L639.0 761.8L636.5 762.4L630.3 763.5L623.9 763.9L617.5 763.4L610.9 762.2L604.4 760.2L597.9 757.4L591.6 753.9L585.4 749.7L579.3 744.8L573.5 739.2L568.0 733.1L562.9 726.4L558.0 719.1L553.6 711.5L549.7 703.4L546.2 695.0L543.2 686.4L540.7 677.5L538.7 668.5L537.3 659.5L536.5 650.4Z" fill="#b9b7b2"/>
<ellipse cx="611.0" cy="660.0" rx="72.5" ry="105.5" transform="rotate(-14.0 611.0 660.0)" fill="url(#gRing)"/>
<path d="M525.5 653.4L525.8 645.3L526.5 637.3L527.8 629.5L529.5 622.0L531.8 614.9L534.4 608.1L537.5 601.9L541.0 596.1L544.9 590.8L549.1 586.1L553.7 582.1L558.5 578.7L563.6 575.9L568.9 573.9L574.3 572.6L579.9 571.9L585.6 572.1L591.3 572.9L597.0 574.4L602.7 576.7L608.2 579.6L625.5 590.5L630.1 593.6L634.6 597.3L638.9 601.4L643.0 605.9L646.8 610.9L650.4 616.2L653.6 621.9L656.6 627.8L659.1 634.0L661.4 640.4L663.2 647.0L664.7 653.6L665.7 660.3L666.3 667.0L666.5 673.6L666.3 680.2L665.7 686.6L664.6 692.7L663.1 698.7L661.3 704.3L659.0 709.6L656.4 714.5L641.0 738.1L637.1 743.4L632.9 748.1L628.3 752.1L623.5 755.5L618.4 758.3L613.1 760.3L607.7 761.6L602.1 762.3L596.4 762.1L590.7 761.3L585.0 759.8L579.3 757.5L573.8 754.6L568.3 751.0L563.0 746.7L558.0 741.9L553.2 736.4L548.7 730.5L544.5 724.0L540.6 717.2L537.2 709.9L534.1 702.4L531.5 694.5L529.4 686.5L527.7 678.3L526.5 670.0L525.7 661.7Z" fill="#c3c8d6"/>
<path d="M510.5 657.3L510.8 649.2L511.6 641.2L512.8 633.4L514.5 625.9L516.8 618.8L519.4 612.0L522.5 605.8L526.0 600.0L529.9 594.7L534.1 590.0L538.7 586.0L543.5 582.6L548.6 579.8L553.9 577.8L568.9 573.9L574.3 572.6L579.9 571.9L585.6 572.1L591.3 572.9L597.0 574.4L602.7 576.7L608.2 579.6L613.7 583.2L619.0 587.5L624.0 592.4L628.8 597.8L633.3 603.7L637.5 610.2L641.4 617.0L644.8 624.3L647.9 631.8L650.5 639.7L652.6 647.7L654.3 655.9L655.5 664.2L656.3 672.5L656.5 680.8L656.2 688.9L655.5 696.9L654.2 704.7L652.5 712.2L650.2 719.3L647.6 726.0L644.5 732.3L641.0 738.1L637.1 743.4L632.9 748.1L628.3 752.1L623.5 755.5L618.4 758.3L613.1 760.3L598.1 764.2L592.7 765.5L587.1 766.2L581.4 766.0L575.7 765.2L570.0 763.7L564.3 761.4L558.8 758.5L553.3 754.9L548.0 750.6L543.0 745.8L538.2 740.3L533.7 734.4L529.5 727.9L525.6 721.1L522.2 713.8L519.1 706.3L516.5 698.4L514.4 690.4L512.7 682.2L511.4 673.9L510.7 665.6Z" fill="url(#gOr)"/>
<path d="M500.5 659.9L500.8 651.8L501.6 643.8L502.8 636.0L504.6 628.5L506.8 621.4L509.4 614.6L512.5 608.4L516.0 602.6L519.9 597.3L524.1 592.6L528.7 588.6L533.5 585.2L538.6 582.4L543.9 580.4L553.9 577.8L559.3 576.5L564.9 575.8L570.6 576.0L576.3 576.8L582.0 578.3L587.7 580.6L593.2 583.5L598.7 587.1L604.0 591.4L609.0 596.2L613.8 601.7L618.3 607.6L622.5 614.1L626.4 620.9L629.8 628.2L632.9 635.7L635.5 643.6L637.6 651.6L639.3 659.8L640.5 668.1L641.3 676.4L641.5 684.7L641.2 692.8L640.5 700.8L639.2 708.6L637.5 716.1L635.2 723.2L632.6 730.0L629.5 736.2L626.0 742.0L622.1 747.3L617.9 752.0L613.3 756.0L608.5 759.4L603.4 762.2L598.1 764.2L588.1 766.8L582.7 768.1L577.1 768.8L571.4 768.6L565.7 767.8L560.0 766.3L554.3 764.0L548.8 761.1L543.3 757.5L538.0 753.2L533.0 748.4L528.2 742.9L523.7 737.0L519.5 730.5L515.6 723.7L512.2 716.4L509.1 708.9L506.5 701.0L504.4 693.0L502.7 684.8L501.4 676.5L500.7 668.2Z" fill="#e3e0c6"/>
<ellipse cx="566.0" cy="673.6" rx="64.3" ry="96.0" transform="rotate(-10.0 566.0 673.6)" fill="url(#gCream)"/>
<path d="M391.4 688.8L391.6 682.0L392.3 675.4L393.3 669.0L394.8 662.9L396.6 657.1L398.9 651.6L401.5 646.5L404.5 641.8L407.8 637.6L411.4 634.0L415.3 630.8L419.5 628.2L423.9 626.1L428.4 624.7L546.5 594.5L551.2 593.6L556.0 593.4L560.8 593.8L565.7 594.7L570.6 596.2L575.5 598.4L580.3 601.1L585.0 604.3L589.5 608.1L593.9 612.3L598.0 617.0L601.9 622.2L605.5 627.7L608.9 633.5L611.9 639.7L614.5 646.1L616.8 652.7L618.7 659.5L620.2 666.3L621.3 673.2L622.0 680.1L622.2 687.0L622.0 693.7L621.4 700.3L620.4 706.6L618.9 712.7L617.0 718.5L614.8 724.0L612.2 729.0L609.2 733.7L605.9 737.8L602.3 741.5L598.5 744.6L594.3 747.2L590.0 749.3L585.5 750.7L467.6 781.9L462.9 782.7L458.1 783.0L453.2 782.6L448.3 781.7L443.3 780.1L438.4 778.0L433.6 775.2L428.9 772.0L424.3 768.2L420.0 763.9L415.8 759.2L411.9 754.0L408.2 748.5L404.9 742.6L401.8 736.4L399.2 730.0L396.9 723.3L394.9 716.5L393.4 709.6L392.4 702.7L391.7 695.7Z" fill="url(#gCh)"/>
<path d="M475.0 576.0V612.0A35.0 10.5 0 0 0 545.0 612.0V576.0Z" fill="url(#gN)"/><path d="M467.8 563.0L475.0 574.1A35.0 10.5 0 0 0 545.0 574.1L552.2 563.0Z" fill="#a9a58f"/><path d="M455.0 556.0V563.0A55.0 16.5 0 0 0 565.0 563.0V556.0Z" fill="#cdc9b2"/><ellipse cx="510.0" cy="556.0" rx="55.0" ry="16.5" fill="#e9e6d3"/><ellipse cx="510.0" cy="556.0" rx="39.5" ry="9.5" fill="url(#bore)"/><rect x="555.4" y="557.2" width="2.6" height="1.6" fill="#111"/><rect x="550.8" y="561.1" width="2.6" height="1.6" fill="#111"/><rect x="542.1" y="564.4" width="2.6" height="1.6" fill="#111"/><rect x="530.2" y="566.8" width="2.6" height="1.6" fill="#111"/><rect x="516.1" y="568.0" width="2.6" height="1.6" fill="#111"/><rect x="501.3" y="568.0" width="2.6" height="1.6" fill="#111"/><rect x="487.2" y="566.8" width="2.6" height="1.6" fill="#111"/><rect x="475.3" y="564.4" width="2.6" height="1.6" fill="#111"/><rect x="466.6" y="561.1" width="2.6" height="1.6" fill="#111"/><rect x="462.0" y="557.2" width="2.6" height="1.6" fill="#111"/><rect x="462.0" y="553.2" width="2.6" height="1.6" fill="#111"/><rect x="466.6" y="549.3" width="2.6" height="1.6" fill="#111"/><rect x="475.3" y="546.0" width="2.6" height="1.6" fill="#111"/><rect x="487.2" y="543.6" width="2.6" height="1.6" fill="#111"/><rect x="501.3" y="542.4" width="2.6" height="1.6" fill="#111"/><rect x="516.1" y="542.4" width="2.6" height="1.6" fill="#111"/><rect x="530.2" y="543.6" width="2.6" height="1.6" fill="#111"/><rect x="542.1" y="546.0" width="2.6" height="1.6" fill="#111"/><rect x="550.8" y="549.3" width="2.6" height="1.6" fill="#111"/><rect x="555.4" y="553.2" width="2.6" height="1.6" fill="#111"/>
<rect x="506.500" y="770" width="7" height="13" rx="2" fill="url(#gN)"/>
<path d="M359.3 687.6L359.7 679.9L360.7 672.3L362.1 665.1L364.1 658.2L366.5 651.8L369.4 645.7L372.7 640.1L376.4 635.1L380.5 630.7L384.9 626.8L389.7 623.6L394.7 621.0L408.9 614.2L414.3 612.3L419.9 611.0L425.6 610.5L431.5 610.8L437.5 611.7L443.4 613.3L449.4 615.7L455.3 618.7L461.1 622.4L466.7 626.8L472.2 631.7L477.4 637.2L482.3 643.2L486.9 649.7L491.2 656.6L495.1 663.9L498.5 671.5L501.6 679.3L504.1 687.4L506.2 695.6L507.8 703.9L508.9 712.1L509.5 720.4L509.5 728.5L509.0 736.5L508.0 744.1L506.5 751.6L504.5 758.6L502.1 765.3L499.1 771.5L495.7 777.2L491.9 782.4L487.7 786.9L483.2 790.9L478.3 794.2L473.1 796.8L467.7 798.7L462.1 800.0L446.6 802.0L441.0 802.5L435.2 802.3L429.4 801.4L423.6 799.8L417.8 797.5L412.1 794.5L406.4 790.9L400.9 786.7L395.6 781.9L390.6 776.5L385.8 770.7L381.3 764.4L377.1 757.6L373.3 750.5L370.0 743.1L367.0 735.5L364.5 727.6L362.5 719.6L360.9 711.6L359.9 703.5L359.3 695.5Z" fill="url(#gRim)"/>
<ellipse cx="426.0" cy="710.0" rx="64.0" ry="94.5" transform="rotate(-16.0 426.0 710.0)" fill="#dcdcdc"/>
<g fill="#e6e6e6" stroke="#000" stroke-width="1.5"><circle cx="482.5" cy="693.8" r="3.3"/><circle cx="485.0" cy="704.0" r="3.3"/><circle cx="486.7" cy="714.4" r="3.3"/><circle cx="487.4" cy="724.7" r="3.3"/><circle cx="487.3" cy="734.7" r="3.3"/><circle cx="486.2" cy="744.4" r="3.3"/><circle cx="484.3" cy="753.6" r="3.3"/><circle cx="481.5" cy="762.2" r="3.3"/><circle cx="478.0" cy="770.0" r="3.3"/><circle cx="473.6" cy="776.9" r="3.3"/><circle cx="468.6" cy="782.9" r="3.3"/><circle cx="462.9" cy="787.8" r="3.3"/><circle cx="456.8" cy="791.5" r="3.3"/><circle cx="450.1" cy="794.1" r="3.3"/><circle cx="443.1" cy="795.5" r="3.3"/><circle cx="435.9" cy="795.5" r="3.3"/><circle cx="428.5" cy="794.4" r="3.3"/><circle cx="421.1" cy="792.0" r="3.3"/><circle cx="413.7" cy="788.4" r="3.3"/><circle cx="406.6" cy="783.7" r="3.3"/><circle cx="399.7" cy="777.9" r="3.3"/><circle cx="393.2" cy="771.1" r="3.3"/><circle cx="387.2" cy="763.4" r="3.3"/><circle cx="381.7" cy="755.0" r="3.3"/><circle cx="376.9" cy="745.9" r="3.3"/><circle cx="372.8" cy="736.2" r="3.3"/><circle cx="369.5" cy="726.2" r="3.3"/><circle cx="367.0" cy="716.0" r="3.3"/><circle cx="365.3" cy="705.6" r="3.3"/><circle cx="364.6" cy="695.3" r="3.3"/><circle cx="364.7" cy="685.3" r="3.3"/><circle cx="365.8" cy="675.6" r="3.3"/><circle cx="367.7" cy="666.4" r="3.3"/><circle cx="370.5" cy="657.8" r="3.3"/><circle cx="374.0" cy="650.0" r="3.3"/><circle cx="378.4" cy="643.1" r="3.3"/><circle cx="383.4" cy="637.1" r="3.3"/><circle cx="389.1" cy="632.2" r="3.3"/><circle cx="395.2" cy="628.5" r="3.3"/><circle cx="401.9" cy="625.9" r="3.3"/><circle cx="408.9" cy="624.5" r="3.3"/><circle cx="416.1" cy="624.5" r="3.3"/><circle cx="423.5" cy="625.6" r="3.3"/><circle cx="430.9" cy="628.0" r="3.3"/><circle cx="438.3" cy="631.6" r="3.3"/><circle cx="445.4" cy="636.3" r="3.3"/><circle cx="452.3" cy="642.1" r="3.3"/><circle cx="458.8" cy="648.9" r="3.3"/><circle cx="464.8" cy="656.6" r="3.3"/><circle cx="470.3" cy="665.0" r="3.3"/><circle cx="475.1" cy="674.1" r="3.3"/><circle cx="479.2" cy="683.8" r="3.3"/></g>
<path d="M1046 509L1008 511Q997 514 997 534Q998 550 1005 554L1046 574Z" fill="url(#gNv)"/>
<ellipse cx="1047.500" cy="541" rx="26" ry="34.700" transform="rotate(-4 1047.500 541)" fill="#e3e0ca"/>
<ellipse cx="1049" cy="541" rx="25" ry="34" transform="rotate(-4 1049 541)" fill="#efecd8"/>
<ellipse cx="1049" cy="543" rx="16.500" ry="24.500" transform="rotate(-4 1049 543)" fill="url(#bore)"/>
<path d="M1040 522q12 4 22 18q-14-4-24 8z" fill="#f7f5ea" opacity=".8"/>
<rect x="1067.7" y="548.0" width="2.200" height="2.200" fill="#111"/>
<rect x="1062.4" y="561.3" width="2.200" height="2.200" fill="#111"/>
<rect x="1053.2" y="568.9" width="2.200" height="2.200" fill="#111"/>
<rect x="1042.6" y="568.9" width="2.200" height="2.200" fill="#111"/>
<rect x="1033.4" y="561.3" width="2.200" height="2.200" fill="#111"/>
<rect x="1028.1" y="548.0" width="2.200" height="2.200" fill="#111"/>
<rect x="1028.1" y="532.8" width="2.200" height="2.200" fill="#111"/>
<rect x="1033.4" y="519.5" width="2.200" height="2.200" fill="#111"/>
<rect x="1042.6" y="511.9" width="2.200" height="2.200" fill="#111"/>
<rect x="1053.2" y="511.9" width="2.200" height="2.200" fill="#111"/>
<rect x="1062.4" y="519.5" width="2.200" height="2.200" fill="#111"/>
<rect x="1067.7" y="532.8" width="2.200" height="2.200" fill="#111"/>
<path d="M914 551.500L943 559.500L942 568L913 559Q910.500 555 914 551.500Z" fill="url(#gNv)"/><ellipse cx="944.500" cy="563.500" rx="7.500" ry="12" fill="#dedbc6"/>
<path d="M903 649L943 658L942 667L901 657.500Q898.500 653 903 649Z" fill="url(#gNv)"/><ellipse cx="944.500" cy="662" rx="7.500" ry="12" fill="#dedbc6"/>
<path d="M1153 575.500L1163 584L1158 589L1149 580.500Q1148.500 576.500 1153 575.500Z" fill="url(#gNv)"/>
<path d="M517 685L614 660M651 650L663 647M1389.500 459L1485.300 435.300M299 740.500L427 708" stroke="#000" stroke-width="2" fill="none"/>
<path d="M1283 469l7-2" stroke="#000" stroke-width="1.500"/>
<path d="M440 612V425L1447 165M342 622L460 592M371 508V828.500M342 836.500L459 805.600M318.500 735V946.500M303.300 898.800L706.700 795M558 460V593M611.500 446V556M683 400V504M794.400 809.500L876.700 830.400M1246.700 692L1329 713M1204.700 265V368M1276.500 274V407M1301 268V392M1429 236V367M1166.700 298L1431 366M1313 359L1375.500 374M1504.700 408.300L1582 428.700M510 530V562M760.200 417V447M845 385V432M941 367V399M1122 320V352M1085.500 640V685.500M807.800 726.700V758" stroke="#000" stroke-width="2" fill="none"/>
<path d="M825 431Q838 414 856 416M1067 650Q1082 662 1097 651M741 459l5-4M921 412l5-4M1101 365l5-4" stroke="#000" stroke-width="1.600" fill="none"/>
<path d="M848 416l13-8 4 12-13 7z" fill="#2f8ef0"/><path d="M838 428l14-6-2 6z" fill="#2c6fd8"/>
<path d="M519 557l9-5v12z" fill="#2f8ef0"/>
<path d="M770 441l7-4v11z" fill="#2f8ef0"/><path d="M950 392l8-4v11z" fill="#2f8ef0"/><path d="M1130 345l7-4v10z" fill="#2f8ef0"/>
<path d="M1078 648l9-8 7 8zM1095 644l11-5v16z" fill="#2f8ef0"/>
<path d="M805 721l8-8 7 8zM818 716l10-4v14z" fill="#2f8ef0"/>
<path d="M1037 541l8-9 7 9-7 6zM1053 541l9-8 6 10-8 5z" fill="#2f8ef0"/>
<path d="M1032 546q16-8 34 0" stroke="#000" stroke-width="1.600" fill="none"/>
<text x="944" y="293" font-size="12.5" fill="#0a0a14" font-weight="bold" letter-spacing="0.700" stroke="#0a0a14" stroke-width=".35">8353.26 (Tan - Tan)</text><text x="440" y="487.5" font-size="12.5" fill="#0a0a14" font-weight="bold" letter-spacing="0.687" stroke="#0a0a14" stroke-width=".35">8353.26</text><text x="371.5" y="505" font-size="12.5" fill="#0a0a14" font-weight="bold" letter-spacing="0.732" stroke="#0a0a14" stroke-width=".35">Dia=1298.01</text><text x="558" y="456" font-size="12.5" fill="#0a0a14" font-weight="bold" letter-spacing="0.830" stroke="#0a0a14" stroke-width=".35">7371.47</text><text x="611" y="442" font-size="12.5" fill="#0a0a14" font-weight="bold" letter-spacing="0.830" stroke="#0a0a14" stroke-width=".35">6929.98</text><text x="683" y="396" font-size="12.5" fill="#0a0a14" font-weight="bold" letter-spacing="0.830" stroke="#0a0a14" stroke-width=".35">6335.62</text><text x="852" y="844.5" font-size="12.5" fill="#0a0a14" font-weight="bold" letter-spacing="0.687" stroke="#0a0a14" stroke-width=".35">6029.06</text><text x="1303" y="727" font-size="12.5" fill="#0a0a14" font-weight="bold" letter-spacing="0.830" stroke="#0a0a14" stroke-width=".35">2280.50</text><text x="318" y="962" font-size="12.5" fill="#0a0a14" font-weight="bold" letter-spacing="0.794" stroke="#0a0a14" stroke-width=".35">965.20</text><text x="1204.5" y="261" font-size="12.5" fill="#0a0a14" font-weight="bold" letter-spacing="1.044" stroke="#0a0a14" stroke-width=".35">2014.34</text><text x="1276.5" y="271.3" font-size="12.5" fill="#0a0a14" font-weight="bold" letter-spacing="0.758" stroke="#0a0a14" stroke-width=".35">1419.98</text><text x="1301.3" y="264.7" font-size="12.5" fill="#0a0a14" font-weight="bold" letter-spacing="0.787" stroke="#0a0a14" stroke-width=".35">1219.98</text><text x="1429" y="232" font-size="12.5" fill="#0a0a14" font-weight="bold" letter-spacing="0.794" stroke="#0a0a14" stroke-width=".35">158.49</text><text x="1152.4" y="296.7" font-size="13" fill="#050508" font-weight="bold" letter-spacing="-0.090" >NLL</text><text x="1301" y="356.7" font-size="13" fill="#050508" font-weight="bold" letter-spacing="-0.090" >NLL</text><text x="1422" y="366" font-size="13" fill="#050508" font-weight="bold" letter-spacing="-0.090" >NLL</text><text x="1570" y="426.4" font-size="13" fill="#050508" font-weight="bold" letter-spacing="0.243" >NLL</text><text x="1161.5" y="515.5" font-size="13" fill="#050508" font-weight="bold" letter-spacing="-0.020" >L1B</text><text x="1153" y="596" font-size="13" fill="#050508" font-weight="bold" letter-spacing="-0.520" >L1A</text><text x="931" y="570" font-size="13" fill="#050508" font-weight="bold" letter-spacing="0.147" >L2B</text><text x="932" y="669" font-size="13" fill="#050508" font-weight="bold" letter-spacing="-0.186" >L2A</text><text x="1372" y="369" font-size="13" fill="#050508" font-weight="bold" letter-spacing="0.049" >V2</text><text x="836.5" y="437" font-size="13" fill="#050508" font-weight="bold" letter-spacing="-1.201" >V1</text><text x="1444" y="261.5" font-size="13" fill="#000" letter-spacing="1.328" >X</text><text x="1541.5" y="481" font-size="13" fill="#000" letter-spacing="1.328" >Y</text><text x="293" y="744.5" font-size="13" fill="#000" letter-spacing="2.059" >Z</text><text x="503" y="562" font-size="13" fill="#1fa030" font-weight="bold" letter-spacing="-1.586" stroke="#06400f" stroke-width=".7" paint-order="stroke">T1</text><text x="748" y="452" font-size="13" fill="#1fa030" font-weight="bold" letter-spacing="-0.430" stroke="#06400f" stroke-width=".7" paint-order="stroke">S2A</text><text x="928" y="404" font-size="13" fill="#1fa030" font-weight="bold" letter-spacing="-0.430" stroke="#06400f" stroke-width=".7" paint-order="stroke">S2B</text><text x="1110" y="357" font-size="13" fill="#1fa030" font-weight="bold" letter-spacing="-0.430" stroke="#06400f" stroke-width=".7" paint-order="stroke">S2C</text><text x="1040" y="547" font-size="13" fill="#1fa030" font-weight="bold" letter-spacing="-0.951" stroke="#06400f" stroke-width=".7" paint-order="stroke">S1</text>
</svg>
<!-- sec_right -->
<div class="ph" style="left:1663px;top:69px;width:199px"></div>
<div class="t" style="left:1667.5px;top:71.84px;font-size:12px;line-height:14px;color:#4c5969;letter-spacing:-0.386px;">Component Tree</div>
<div class="a" style="left:1667px;top:85px;width:8px;height:1px;background:#4c5969"></div>
<div class="a" style="left:1815px;top:76px;border:5px solid transparent;border-top:6px solid #000;border-bottom:0"></div>
<svg style="left:1832px;top:74px" width="8" height="10" viewBox="0 0 8 10"><path d="M2 .5h4M2.500 .5v5M5.500 .5v5M.5 5.500h7M4 5.500v4" stroke="#000" stroke-width="1.300" fill="none"/><rect x="4.500" y="1" width="1.500" height="4.500" fill="#000"/></svg>
<svg style="left:1848px;top:74px" width="10" height="9" viewBox="0 0 10 9"><path d="M1 .8l8 7.400M9 .8L1 8.200" stroke="#000" stroke-width="1.800"/></svg>
<div class="a" style="left:1663px;top:88px;width:199px;height:24px;background:linear-gradient(#fcfcfe,#e8e9f4 40%,#cccde0 78%,#b7b9ce)"></div>
<svg style="left:1669px;top:92px" width="16" height="16" viewBox="0 0 16 16"><circle cx="10" cy="5.500" r="4.500" fill="#d8ecfb" stroke="#5a6f98" stroke-width="1.600"/><path d="M6.500 9L2 13.500" stroke="#b8623a" stroke-width="3.200" stroke-linecap="round"/></svg>
<div class="a" style="left:1691px;top:92px;width:1px;height:16px;background:#b3b5c8;box-shadow:1px 0 0 #f6f6fb"></div>
<svg style="left:1698px;top:92px" width="16" height="16" viewBox="0 0 16 16"><path d="M2 14L13 2l1.500 1.500L4 15z" fill="#b5b7c4"/><path d="M0 15.500h8" stroke="#c2c4cf" stroke-width="1"/></svg>
<div class="a" style="left:1720px;top:92px;width:1px;height:16px;background:#b3b5c8;box-shadow:1px 0 0 #f6f6fb"></div>
<svg style="left:1727px;top:93px" width="15" height="14" viewBox="0 0 15 14"><path d="M1 1l13 12M14 1L1 13" stroke="#a9abb8" stroke-width="2.200"/></svg>
<div class="a" style="left:1749px;top:92px;width:1px;height:16px;background:#b3b5c8;box-shadow:1px 0 0 #f6f6fb"></div>
<div class="a" style="left:1757px;top:92px;width:15px;height:15px;border-radius:8px;background:radial-gradient(circle at 45% 35%,#6f9af0,#2452cf 60%,#12339a);border:1px solid #dfe6fa"></div>
<div class="t" style="left:1761.5px;top:93.69px;font-size:11px;line-height:13px;font-weight:bold;color:#fff;">?</div>
<div class="a" style="left:1663px;top:111px;width:199px;height:405px;background:#fff;border:1px solid #8e8e96;border-bottom-color:#c8c8d0"></div>
<div class="a" style="left:1664px;top:112px;width:181px;height:386px;overflow:hidden" id="tree">
<svg style="left:0;top:0" width="181" height="386"><path d="M12.500 11V386" stroke="#8a8a8a" stroke-width="1" stroke-dasharray="1 1" fill="none"/><path d="M30.500 38V119" stroke="#8a8a8a" stroke-width="1" stroke-dasharray="1 1" fill="none"/><path d="M30.500 200V386" stroke="#8a8a8a" stroke-width="1" stroke-dasharray="1 1" fill="none"/><path d="M14 11.5H22" stroke="#8a8a8a" stroke-width="1" stroke-dasharray="1 1" fill="none"/><path d="M14 29.5H22" stroke="#8a8a8a" stroke-width="1" stroke-dasharray="1 1" fill="none"/><path d="M32 47.5H40.5" stroke="#8a8a8a" stroke-width="1" stroke-dasharray="1 1" fill="none"/><path d="M32 65.5H40.5" stroke="#8a8a8a" stroke-width="1" stroke-dasharray="1 1" fill="none"/><path d="M32 83.5H40.5" stroke="#8a8a8a" stroke-width="1" stroke-dasharray="1 1" fill="none"/><path d="M50 101.5H59" stroke="#8a8a8a" stroke-width="1" stroke-dasharray="1 1" fill="none"/><path d="M48.5 92V101.5" stroke="#8a8a8a" stroke-width="1" stroke-dasharray="1 1" fill="none"/><path d="M32 119.5H40.5" stroke="#8a8a8a" stroke-width="1" stroke-dasharray="1 1" fill="none"/><path d="M14 137.5H22" stroke="#8a8a8a" stroke-width="1" stroke-dasharray="1 1" fill="none"/><path d="M14 155.5H22" stroke="#8a8a8a" stroke-width="1" stroke-dasharray="1 1" fill="none"/><path d="M14 173.5H22" stroke="#8a8a8a" stroke-width="1" stroke-dasharray="1 1" fill="none"/><path d="M14 191.5H22" stroke="#8a8a8a" stroke-width="1" stroke-dasharray="1 1" fill="none"/><path d="M32 209.5H40.5" stroke="#8a8a8a" stroke-width="1" stroke-dasharray="1 1" fill="none"/><path d="M32 227.5H40.5" stroke="#8a8a8a" stroke-width="1" stroke-dasharray="1 1" fill="none"/><path d="M32 245.5H40.5" stroke="#8a8a8a" stroke-width="1" stroke-dasharray="1 1" fill="none"/><path d="M32 263.5H40.5" stroke="#8a8a8a" stroke-width="1" stroke-dasharray="1 1" fill="none"/><path d="M32 281.5H40.5" stroke="#8a8a8a" stroke-width="1" stroke-dasharray="1 1" fill="none"/><path d="M32 299.5H40.5" stroke="#8a8a8a" stroke-width="1" stroke-dasharray="1 1" fill="none"/><path d="M50 317.5H59" stroke="#8a8a8a" stroke-width="1" stroke-dasharray="1 1" fill="none"/><path d="M48.5 308V317.5" stroke="#8a8a8a" stroke-width="1" stroke-dasharray="1 1" fill="none"/><path d="M32 335.5H40.5" stroke="#8a8a8a" stroke-width="1" stroke-dasharray="1 1" fill="none"/><path d="M50 353.5H59" stroke="#8a8a8a" stroke-width="1" stroke-dasharray="1 1" fill="none"/><path d="M48.5 344V353.5" stroke="#8a8a8a" stroke-width="1" stroke-dasharray="1 1" fill="none"/><path d="M32 371.5H40.5" stroke="#8a8a8a" stroke-width="1" stroke-dasharray="1 1" fill="none"/><path d="M50 389.5H59" stroke="#8a8a8a" stroke-width="1" stroke-dasharray="1 1" fill="none"/><path d="M48.5 380V389.5" stroke="#8a8a8a" stroke-width="1" stroke-dasharray="1 1" fill="none"/></svg>
<svg style="left:23px;top:3.5px" width="16" height="16" viewBox="0 0 16 16"><ellipse cx="8" cy="8" rx="6.500" ry="7.500" fill="#c9c20c"/><ellipse cx="8.800" cy="8" rx="5" ry="6.300" fill="#f6f21c"/></svg>
<div class="t" style="left:44px;top:4.34px;font-size:12px;line-height:14px;letter-spacing:-0.044px;">Channel Cover (front)</div>
<svg style="left:23px;top:21.5px" width="16" height="16" viewBox="0 0 16 16"><path d="M2 3v10c0 3 11 3 11 0V3z" fill="#3fb6bf"/><path d="M4 4v10" stroke="#8fe4ea" stroke-width="2.500"/><ellipse cx="7.500" cy="3" rx="5.500" ry="2.200" fill="#7fdde4"/></svg>
<div class="t" style="left:44px;top:22.34px;font-size:12px;line-height:14px;letter-spacing:-0.082px;">Front Channel</div>
<div class="a" style="left:8px;top:25.5px;width:9px;height:9px;border:1px solid #9a9a9a;background:linear-gradient(#fff,#e4e4e4);border-radius:1px"></div><div class="a" style="left:10px;top:29.5px;width:5px;height:1px;background:#333"></div>
<svg style="left:41.5px;top:39.5px" width="16" height="16" viewBox="0 0 16 16"><ellipse cx="8" cy="4.500" rx="7.500" ry="4" fill="#9ccfd6"/><ellipse cx="8" cy="4.500" rx="4.500" ry="2.200" fill="#3fb6bf"/><path d="M3.500 7v5c0 2.500 9 2.500 9 0V7c0 2-9 2-9 0z" fill="#5cc3cb"/></svg>
<div class="t" style="left:63px;top:40.34px;font-size:12px;line-height:14px;letter-spacing:-0.180px;">Channel Cover Flange</div>
<svg style="left:41.5px;top:57.5px" width="16" height="16" viewBox="0 0 16 16"><ellipse cx="8" cy="4.500" rx="7.500" ry="4" fill="#9ccfd6"/><ellipse cx="8" cy="4.500" rx="4.500" ry="2.200" fill="#3fb6bf"/><path d="M3.500 7v5c0 2.500 9 2.500 9 0V7c0 2-9 2-9 0z" fill="#5cc3cb"/></svg>
<div class="t" style="left:63px;top:58.34px;font-size:12px;line-height:14px;letter-spacing:-0.098px;">Tube Side Flange (fror</div>
<svg style="left:41.5px;top:75.5px" width="16" height="16" viewBox="0 0 16 16"><rect x="0" y="1" width="5" height="14" fill="#39aeb6"/><rect x="4" y="4" width="6" height="8" fill="#b9bcc0"/><ellipse cx="11" cy="8" rx="3.500" ry="5.500" fill="#8d9095"/><ellipse cx="11.300" cy="8" rx="1.600" ry="3" fill="#e8e8e8"/></svg>
<div class="t" style="left:63px;top:76.34px;font-size:12px;line-height:14px;letter-spacing:-0.599px;">TUBE INLET (T1)</div>
<div class="a" style="left:26px;top:79.5px;width:9px;height:9px;border:1px solid #9a9a9a;background:linear-gradient(#fff,#e4e4e4);border-radius:1px"></div><div class="a" style="left:28px;top:83.5px;width:5px;height:1px;background:#333"></div>
<svg style="left:60px;top:93.5px" width="16" height="16" viewBox="0 0 16 16"><ellipse cx="8" cy="9" rx="7.500" ry="5" fill="#d9d615"/><ellipse cx="8.500" cy="7" rx="5" ry="2.500" fill="#f4f28a"/><ellipse cx="8.500" cy="7.200" rx="2.500" ry="1.200" fill="#a9a510"/></svg>
<div class="t" style="left:82px;top:94.34px;font-size:12px;line-height:14px;letter-spacing:-0.568px;">ASME B16.5/16.47</div>
<div class="a" style="left:179px;top:102px;width:2px;height:1px;background:#000"></div>
<svg style="left:41.5px;top:111.5px" width="16" height="16" viewBox="0 0 16 16"><rect x="0" y="1" width="5" height="14" fill="#39aeb6"/><rect x="4" y="4" width="6" height="8" fill="#b9bcc0"/><ellipse cx="11" cy="8" rx="3.500" ry="5.500" fill="#8d9095"/><ellipse cx="11.300" cy="8" rx="1.600" ry="3" fill="#e8e8e8"/></svg>
<div class="t" style="left:63px;top:112.34px;font-size:12px;line-height:14px;letter-spacing:-0.624px;">TUBE DRAIN (D2)</div>
<svg style="left:23px;top:129.5px" width="16" height="16" viewBox="0 0 16 16"><ellipse cx="8" cy="8" rx="6.500" ry="7.500" fill="#c9820c"/><ellipse cx="8.800" cy="8" rx="5" ry="6.300" fill="#f0a81c"/></svg>
<div class="t" style="left:44px;top:130.34px;font-size:12px;line-height:14px;letter-spacing:-0.142px;">Tubesheet</div>
<svg style="left:23px;top:147.5px" width="16" height="16" viewBox="0 0 16 16"><path d="M2 3v10c0 3 11 3 11 0V3z" fill="#3fb6bf"/><path d="M4 4v10" stroke="#8fe4ea" stroke-width="2.500"/><ellipse cx="7.500" cy="3" rx="5.500" ry="2.200" fill="#7fdde4"/></svg>
<div class="t" style="left:44px;top:148.34px;font-size:12px;line-height:14px;letter-spacing:0.025px;">Port Cylinder (front) #1</div>
<svg style="left:23px;top:165.5px" width="16" height="16" viewBox="0 0 16 16"><path d="M1 3c0-2.500 13-2.500 13 0L10 14c-1 1.500-4 1.500-5 0z" fill="#d93a1c"/><ellipse cx="7.500" cy="3" rx="6.500" ry="2" fill="#ef6a48"/></svg>
<div class="t" style="left:44px;top:166.34px;font-size:12px;line-height:14px;letter-spacing:-0.205px;">Front Cone</div>
<svg style="left:23px;top:183.5px" width="16" height="16" viewBox="0 0 16 16"><path d="M2 3v10c0 3 11 3 11 0V3z" fill="#3fb6bf"/><path d="M4 4v10" stroke="#8fe4ea" stroke-width="2.500"/><ellipse cx="7.500" cy="3" rx="5.500" ry="2.200" fill="#7fdde4"/></svg>
<div class="t" style="left:44px;top:184.34px;font-size:12px;line-height:14px;letter-spacing:-0.297px;">Shell #1</div>
<div class="a" style="left:8px;top:187.5px;width:9px;height:9px;border:1px solid #9a9a9a;background:linear-gradient(#fff,#e4e4e4);border-radius:1px"></div><div class="a" style="left:10px;top:191.5px;width:5px;height:1px;background:#333"></div>
<svg style="left:41.5px;top:201.5px" width="16" height="16" viewBox="0 0 16 16"><path d="M0 1h15v6c-4-1-8 0-10 3H0z" fill="#2f9aa6"/><path d="M3 8c3-1 8-1 12 0v7H5z" fill="#6d7176"/></svg>
<div class="t" style="left:63px;top:202.34px;font-size:12px;line-height:14px;letter-spacing:-0.562px;">Saddle</div>
<svg style="left:41.5px;top:219.5px" width="16" height="16" viewBox="0 0 16 16"><path d="M1 12C1 5 5 1 9 1c4 0 6 3 6 7v7L3 12z" fill="#3a3a3a"/><path d="M1 12C1 6 4 2 8 2c3 0 5 3 5 6l-1 6z" fill="#5a5a5a"/></svg>
<div class="t" style="left:63px;top:220.34px;font-size:12px;line-height:14px;letter-spacing:-0.130px;">Baffle #1</div>
<svg style="left:41.5px;top:237.5px" width="16" height="16" viewBox="0 0 16 16"><path d="M1 12C1 5 5 1 9 1c4 0 6 3 6 7v7L3 12z" fill="#3a3a3a"/><path d="M1 12C1 6 4 2 8 2c3 0 5 3 5 6l-1 6z" fill="#5a5a5a"/></svg>
<div class="t" style="left:63px;top:238.34px;font-size:12px;line-height:14px;letter-spacing:-0.130px;">Baffle #2</div>
<svg style="left:41.5px;top:255.5px" width="16" height="16" viewBox="0 0 16 16"><path d="M1 12C1 5 5 1 9 1c4 0 6 3 6 7v7L3 12z" fill="#3a3a3a"/><path d="M1 12C1 6 4 2 8 2c3 0 5 3 5 6l-1 6z" fill="#5a5a5a"/></svg>
<div class="t" style="left:63px;top:256.34px;font-size:12px;line-height:14px;letter-spacing:-0.130px;">Baffle #3</div>
<svg style="left:41.5px;top:273.5px" width="16" height="16" viewBox="0 0 16 16"><path d="M1 12C1 5 5 1 9 1c4 0 6 3 6 7v7L3 12z" fill="#3a3a3a"/><path d="M1 12C1 6 4 2 8 2c3 0 5 3 5 6l-1 6z" fill="#5a5a5a"/></svg>
<div class="t" style="left:63px;top:274.34px;font-size:12px;line-height:14px;letter-spacing:-0.130px;">Baffle #4</div>
<svg style="left:41.5px;top:291.5px" width="16" height="16" viewBox="0 0 16 16"><rect x="0" y="1" width="5" height="14" fill="#39aeb6"/><rect x="4" y="4" width="6" height="8" fill="#b9bcc0"/><ellipse cx="11" cy="8" rx="3.500" ry="5.500" fill="#8d9095"/><ellipse cx="11.300" cy="8" rx="1.600" ry="3" fill="#e8e8e8"/></svg>
<div class="t" style="left:63px;top:292.34px;font-size:12px;line-height:14px;letter-spacing:-0.733px;">SHELL INLET (S1)</div>
<div class="a" style="left:26px;top:295.5px;width:9px;height:9px;border:1px solid #9a9a9a;background:linear-gradient(#fff,#e4e4e4);border-radius:1px"></div><div class="a" style="left:28px;top:299.5px;width:5px;height:1px;background:#333"></div>
<svg style="left:60px;top:309.5px" width="16" height="16" viewBox="0 0 16 16"><ellipse cx="8" cy="9" rx="7.500" ry="5" fill="#d9d615"/><ellipse cx="8.500" cy="7" rx="5" ry="2.500" fill="#f4f28a"/><ellipse cx="8.500" cy="7.200" rx="2.500" ry="1.200" fill="#a9a510"/></svg>
<div class="t" style="left:82px;top:310.34px;font-size:12px;line-height:14px;letter-spacing:-0.568px;">ASME B16.5/16.47</div>
<div class="a" style="left:179px;top:318px;width:2px;height:1px;background:#000"></div>
<svg style="left:41.5px;top:327.5px" width="16" height="16" viewBox="0 0 16 16"><rect x="0" y="1" width="5" height="14" fill="#39aeb6"/><rect x="4" y="4" width="6" height="8" fill="#b9bcc0"/><ellipse cx="11" cy="8" rx="3.500" ry="5.500" fill="#8d9095"/><ellipse cx="11.300" cy="8" rx="1.600" ry="3" fill="#e8e8e8"/></svg>
<div class="t" style="left:63px;top:328.34px;font-size:12px;line-height:14px;letter-spacing:-0.726px;">SHELL OUTLET (S2A)</div>
<div class="a" style="left:26px;top:331.5px;width:9px;height:9px;border:1px solid #9a9a9a;background:linear-gradient(#fff,#e4e4e4);border-radius:1px"></div><div class="a" style="left:28px;top:335.5px;width:5px;height:1px;background:#333"></div>
<svg style="left:60px;top:345.5px" width="16" height="16" viewBox="0 0 16 16"><ellipse cx="8" cy="9" rx="7.500" ry="5" fill="#d9d615"/><ellipse cx="8.500" cy="7" rx="5" ry="2.500" fill="#f4f28a"/><ellipse cx="8.500" cy="7.200" rx="2.500" ry="1.200" fill="#a9a510"/></svg>
<div class="t" style="left:82px;top:346.34px;font-size:12px;line-height:14px;letter-spacing:-0.568px;">ASME B16.5/16.47</div>
<div class="a" style="left:179px;top:354px;width:2px;height:1px;background:#000"></div>
<svg style="left:41.5px;top:363.5px" width="16" height="16" viewBox="0 0 16 16"><rect x="0" y="1" width="5" height="14" fill="#39aeb6"/><rect x="4" y="4" width="6" height="8" fill="#b9bcc0"/><ellipse cx="11" cy="8" rx="3.500" ry="5.500" fill="#8d9095"/><ellipse cx="11.300" cy="8" rx="1.600" ry="3" fill="#e8e8e8"/></svg>
<div class="t" style="left:63px;top:364.34px;font-size:12px;line-height:14px;letter-spacing:-0.781px;">SHELL OUTLET (S2B)</div>
<div class="a" style="left:26px;top:367.5px;width:9px;height:9px;border:1px solid #9a9a9a;background:linear-gradient(#fff,#e4e4e4);border-radius:1px"></div><div class="a" style="left:28px;top:371.5px;width:5px;height:1px;background:#333"></div>
<svg style="left:60px;top:381.5px" width="16" height="16" viewBox="0 0 16 16"><ellipse cx="8" cy="9" rx="7.500" ry="5" fill="#d9d615"/><ellipse cx="8.500" cy="7" rx="5" ry="2.500" fill="#f4f28a"/><ellipse cx="8.500" cy="7.200" rx="2.500" ry="1.200" fill="#a9a510"/></svg>
<div class="t" style="left:82px;top:382.34px;font-size:12px;line-height:14px;letter-spacing:-0.568px;">ASME B16.5/16.47</div>
<div class="a" style="left:179px;top:390px;width:2px;height:1px;background:#000"></div>
</div>
<div class="a" style="left:1845px;top:112px;width:16px;height:386px;background:#f1f1f1"></div>
<div class="a" style="left:1849px;top:120px;border:4px solid transparent;border-bottom:5px solid #444;border-top:0"></div>
<div class="a" style="left:1849px;top:486px;border:4px solid transparent;border-top:5px solid #444;border-bottom:0"></div>
<div class="a" style="left:1846px;top:131px;width:14px;height:155px;border:1px solid #979797;border-radius:2px;background:linear-gradient(90deg,#f3f3f3,#e1e1e1 50%,#cfcfcf 52%,#d8d8d8)"></div>
<div class="a" style="left:1850px;top:205px;width:6px;height:1px;background:#666"></div>
<div class="a" style="left:1850px;top:207px;width:6px;height:1px;background:#666"></div>
<div class="a" style="left:1850px;top:209px;width:6px;height:1px;background:#666"></div>
<div class="a" style="left:1850px;top:211px;width:6px;height:1px;background:#666"></div>
<div class="a" style="left:1664px;top:498px;width:197px;height:17px;background:#f1f1f1"></div>
<div class="a" style="left:1670px;top:502px;border:4px solid transparent;border-right:5px solid #444;border-left:0"></div>
<div class="a" style="left:1833px;top:502px;border:4px solid transparent;border-left:5px solid #444;border-right:0"></div>
<div class="a" style="left:1683px;top:499px;width:65px;height:14px;border:1px solid #979797;border-radius:2px;background:linear-gradient(#f3f3f3,#e1e1e1 50%,#cfcfcf 52%,#d8d8d8)"></div>
<div class="a" style="left:1712px;top:503px;width:1px;height:6px;background:#666"></div>
<div class="a" style="left:1714px;top:503px;width:1px;height:6px;background:#666"></div>
<div class="a" style="left:1716px;top:503px;width:1px;height:6px;background:#666"></div>
<div class="a" style="left:1663px;top:519px;width:199px;height:499px;background:#fff;border:1px solid #8e8e96;border-bottom:0"></div>
<div class="a" style="left:1763px;top:520px;width:1px;height:497px;background:#e3e3e3"></div>
<!-- sec_side -->
<div class="a" style="left:1866px;top:73px;width:21px;height:81px;background:linear-gradient(90deg,#f1f1f6,#e3e4ea 50%,#d0d1da);border:1px solid #b4b6c4;border-top-color:#d9dae3"></div>
<div class="a" style="left:1868.500px;top:77px;width:14px;height:14px;border-radius:7px;background:radial-gradient(circle at 45% 35%,#f7b35c,#e8821c 60%,#c9640c)"></div>
<div class="t" style="left:1872.7px;top:78.53px;font-size:10px;line-height:12px;font-weight:bold;color:#fff;">?</div>
<div class="t" style="left:1858px;top:104px;width:34px;height:16px;font-size:12px;line-height:16px;color:#6c6c72;transform:rotate(90deg);letter-spacing:.2px;text-align:center">Help</div><div class="a" style="left:1869px;top:100px;width:1px;height:8px;background:#6c6c72"></div>
<div class="a" style="left:1888px;top:70px;width:32px;height:653px;background:linear-gradient(90deg,#f6f6fb 0,#eeeff6 35%,#d6d7e5 75%,#bfc0d4 100%);border-radius:0 0 4px 4px;box-shadow:0 1px 0 #a9abc0"></div>
<div class="a" style="left:1892px;top:73px;width:2px;height:2px;background:#9a9cb0;box-shadow:1px 1px 0 #fff"></div>
<div class="a" style="left:1896px;top:73px;width:2px;height:2px;background:#9a9cb0;box-shadow:1px 1px 0 #fff"></div>
<div class="a" style="left:1900px;top:73px;width:2px;height:2px;background:#9a9cb0;box-shadow:1px 1px 0 #fff"></div>
<div class="a" style="left:1904px;top:73px;width:2px;height:2px;background:#9a9cb0;box-shadow:1px 1px 0 #fff"></div>
<div class="a" style="left:1908px;top:73px;width:2px;height:2px;background:#9a9cb0;box-shadow:1px 1px 0 #fff"></div>
<div class="a" style="left:1912px;top:73px;width:2px;height:2px;background:#9a9cb0;box-shadow:1px 1px 0 #fff"></div>
<div class="a" style="left:1916px;top:73px;width:2px;height:2px;background:#9a9cb0;box-shadow:1px 1px 0 #fff"></div>
<svg style="left:1892px;top:82px" width="22" height="23" viewBox="0 0 22 23"><path d="M3 6v12c0 3 16 3 16 0V6z" fill="#c9ccd2"/><ellipse cx="11" cy="6" rx="8" ry="3" fill="#e4e6ea"/></svg>
<svg style="left:1892px;top:110px" width="22" height="23" viewBox="0 0 22 23"><path d="M1 6c0-3 20-3 20 0l-6 13c-1 2-7 2-8 0z" fill="#a9adb5"/><ellipse cx="11" cy="6" rx="10" ry="2.800" fill="#c9ccd2"/></svg>
<svg style="left:1892px;top:137px" width="22" height="23" viewBox="0 0 22 23"><path d="M0 13C1 5 21 5 22 13c0 3-22 3-22 0z" fill="#e8901c"/><path d="M3 10c3-3.500 13-3.500 16 0" stroke="#f7c870" stroke-width="2" fill="none"/><ellipse cx="11" cy="14" rx="11" ry="2" fill="#a8640c"/></svg>
<svg style="left:1892px;top:165px" width="22" height="23" viewBox="0 0 22 23"><path d="M0 13C1 5 21 5 22 13c0 3-22 3-22 0z" fill="#1fa8d8"/><path d="M3 10c3-3.500 13-3.500 16 0" stroke="#8fe0f4" stroke-width="2" fill="none"/><ellipse cx="11" cy="14" rx="11" ry="2" fill="#0c78a8"/></svg>
<svg style="left:1892px;top:193px" width="22" height="23" viewBox="0 0 22 23"><path d="M0 15C0 1 22 1 22 15c0 3-22 3-22 0z" fill="#1fb0d0"/><path d="M4 9c3-5 11-5 14 0" stroke="#8fe8f4" stroke-width="2.200" fill="none"/><ellipse cx="11" cy="16" rx="11" ry="2" fill="#0c88a8"/></svg>
<svg style="left:1892px;top:221px" width="22" height="23" viewBox="0 0 22 23"><ellipse cx="11" cy="10" rx="11" ry="4.500" fill="#a9adb5"/><path d="M0 10v3c0 5 22 5 22 0v-3z" fill="#a9adb5"/><ellipse cx="11" cy="10" rx="11" ry="4.500" fill="#b4b7c2"/></svg>
<svg style="left:1892px;top:249px" width="22" height="23" viewBox="0 0 22 23"><ellipse cx="11" cy="13" rx="9.500" ry="3.500" fill="#8a6a10"/><ellipse cx="11" cy="11" rx="9.500" ry="3.500" fill="#e8c01c"/><ellipse cx="11" cy="9.500" rx="6" ry="2.500" fill="#c99a1c"/><ellipse cx="11" cy="9" rx="4" ry="1.500" fill="#f4e08c"/></svg>
<svg style="left:1892px;top:277px" width="22" height="23" viewBox="0 0 22 23"><ellipse cx="11" cy="8" rx="10" ry="6" fill="#c9ccd2"/><path d="M2 10c0 12 18 12 18 0z" fill="#a9adb5"/><ellipse cx="11" cy="8" rx="8" ry="4.500" fill="#e4e6ea"/></svg>
<svg style="left:1892px;top:305px" width="22" height="23" viewBox="0 0 22 23"><ellipse cx="11" cy="12" rx="11" ry="5" fill="#0c7ec9"/><ellipse cx="11" cy="10.500" rx="11" ry="5" fill="#1c9aec"/></svg>
<svg style="left:1892px;top:333px" width="22" height="23" viewBox="0 0 22 23"><ellipse cx="11" cy="6" rx="8" ry="3" fill="#e4e6ea"/><path d="M3 6v4h16V6z" fill="#c9ccd2"/><ellipse cx="11" cy="10" rx="10" ry="3.500" fill="#c9ccd2"/><path d="M5 12v6c0 2.500 12 2.500 12 0v-6z" fill="#a9adb5"/></svg>
<svg style="left:1892px;top:361px" width="22" height="23" viewBox="0 0 22 23"><ellipse cx="11" cy="7" rx="10.500" ry="5" fill="#c9ccd2"/><ellipse cx="11" cy="7" rx="6.500" ry="3" fill="#e4e6ea"/><path d="M4 11c1 3 2 4 2 7 0 2 10 2 10 0 0-3 1-4 2-7z" fill="#a9adb5"/></svg>
<svg style="left:1892px;top:389px" width="22" height="23" viewBox="0 0 22 23"><ellipse cx="11" cy="12" rx="11" ry="6" fill="#a9adb5"/><ellipse cx="11" cy="10" rx="11" ry="6" fill="#c9ccd2"/><ellipse cx="11" cy="9" rx="6" ry="3" fill="#a9adb5"/><ellipse cx="11" cy="8.500" rx="3.500" ry="1.500" fill="#e4e6ea"/></svg>
<svg style="left:1892px;top:417px" width="22" height="23" viewBox="0 0 22 23"><rect x="1" y="1" width="16" height="20" fill="#7fd9e0"/><rect x="1" y="1" width="16" height="3" fill="#2fa9b3"/><path d="M0 8h22M0 14h22" stroke="#8a8d95" stroke-width="2"/><rect x="17" y="3" width="2" height="16" fill="#9a9da5"/></svg>
<svg style="left:1892px;top:445px" width="22" height="23" viewBox="0 0 22 23"><rect x="1" y="2" width="19" height="18" rx="3" fill="#c9ccd2"/><rect x="1" y="6" width="19" height="5" fill="#e4e6ea"/></svg>
<svg style="left:1892px;top:473px" width="22" height="23" viewBox="0 0 22 23"><rect x="0" y="1" width="8" height="21" fill="#2fa9b3"/><rect x="6" y="6" width="9" height="12" fill="#c9ccd2"/><ellipse cx="17" cy="12" rx="5" ry="7" fill="#8d9095"/><ellipse cx="17.500" cy="12" rx="2.500" ry="4" fill="#ececec"/></svg>
<svg style="left:1892px;top:501px" width="22" height="23" viewBox="0 0 22 23"><rect x="0" y="0" width="12" height="22" fill="#f4e81c"/><path d="M0 5h12M0 11h12M0 17h12M4 0v22M8 0v22" stroke="#222" stroke-width="1"/><path d="M2 3l9 16M11 3L2 19" stroke="#d8141c" stroke-width="1.500"/><ellipse cx="17" cy="11" rx="5" ry="6" fill="#1c2c9a"/><ellipse cx="17.500" cy="11" rx="2.500" ry="3.500" fill="#c8c8d8"/><rect x="9" y="6" width="6" height="10" fill="#38a8b8"/></svg>
<svg style="left:1892px;top:529px" width="22" height="23" viewBox="0 0 22 23"><rect x="1" y="1" width="7" height="21" fill="#a9adb5"/><path d="M8 6h13M8 15h13M13 6v9M18 6v9" stroke="#c9ccd2" stroke-width="1.600"/><rect x="6" y="15" width="16" height="3" fill="#c9ccd2"/></svg>
<svg style="left:1892px;top:557px" width="22" height="23" viewBox="0 0 22 23"><rect x="2" y="1" width="19" height="21" fill="#7fd9e0"/><rect x="2" y="1" width="19" height="4" fill="#2fa9b3"/><path d="M2 9h19M2 12h19M2 15h19M2 18h19" stroke="#2fa9b3" stroke-width="1"/></svg>
<svg style="left:1892px;top:586px" width="22" height="23" viewBox="0 0 22 23"><path d="M3 2h16v4H3z" fill="#2fa9b3"/><ellipse cx="11" cy="2.500" rx="8" ry="2" fill="#7fd9e0"/><path d="M3 6h16l1 15H2z" fill="#7d8086"/><path d="M6 6v15" stroke="#a4a7ad" stroke-width="3"/><rect x="1" y="20" width="20" height="2" fill="#6b6e74"/></svg>
<svg style="left:1892px;top:614px" width="22" height="23" viewBox="0 0 22 23"><path d="M0 1h22v8c-8-2-16 1-22 5z" fill="#2fa9b3"/><path d="M4 12c5-3 12-4 18-3v12l-8 1z" fill="#7d8086"/><path d="M14 10l6 11" stroke="#5c5f65" stroke-width="2"/></svg>
<svg style="left:1892px;top:642px" width="22" height="23" viewBox="0 0 22 23"><path d="M3 1h17v7H3z" fill="#2fa9b3"/><ellipse cx="11.500" cy="2" rx="8.500" ry="1.800" fill="#7fd9e0"/><path d="M5 8v13M10 8v14M15 8v12M19 8v13" stroke="#7d8086" stroke-width="2.200"/></svg>
<svg style="left:1892px;top:670px" width="22" height="23" viewBox="0 0 22 23"><rect x="0" y="1" width="13" height="21" fill="#2fa9b3"/><path d="M6 7h10l6 12H4z" fill="#6d7076"/><path d="M10 7l-3 12M14 7l3 12" stroke="#9a9da5" stroke-width="1.500"/></svg>
<svg style="left:1892px;top:698px" width="22" height="23" viewBox="0 0 22 23"><rect x="11" y="3" width="12" height="17" fill="#b7b183"/><circle cx="9" cy="11.500" r="9" fill="#d45a14"/><path d="M7 2h4" stroke="#e8c01c" stroke-width="2"/></svg>
<!-- sec_bottom -->
<div class="a" style="left:0;top:1017px;width:1920px;height:23px;background:#f1edeb;border-top:1px solid #8e8e8e"></div>
<div class="a" style="left:0;top:1018px;width:1920px;height:1px;background:#fbfbfb"></div>
<div class="t" style="left:4px;top:1023.02px;font-size:11.5px;line-height:14px;letter-spacing:-0.319px;">-1898.01, 2547.49, 2368.12</div>
<div class="a" style="left:1660px;top:1024px;border:5px solid transparent;border-left:6px solid #c4c4c4;border-right:0"></div>
<div class="t" style="left:1675px;top:1023.02px;font-size:11.5px;line-height:14px;letter-spacing:0.035px;">Design</div>
<div class="a" style="left:1731px;top:1024px;border:5px solid transparent;border-left:6px solid #c4c4c4;border-right:0"></div>
<div class="t" style="left:1746px;top:1023.02px;font-size:11.5px;line-height:14px;letter-spacing:-0.974px;">MKS</div>
<div class="a" style="left:1787px;top:1024px;border:5px solid transparent;border-left:6px solid #c4c4c4;border-right:0"></div>
<div class="t" style="left:1802px;top:1023.02px;font-size:11.5px;line-height:14px;letter-spacing:-0.440px;">Div 1</div>
<div class="a" style="left:1873px;top:1024px;border:5px solid transparent;border-left:6px solid #c4c4c4;border-right:0"></div>
<div class="t" style="left:1888px;top:1023.02px;font-size:11.5px;line-height:14px;letter-spacing:-0.395px;">2017</div>
<div class="a" style="left:1721px;top:1020px;width:1px;height:19px;background:#dcd8d6;box-shadow:1px 0 0 #faf8f7"></div>
<div class="a" style="left:1777px;top:1020px;width:1px;height:19px;background:#dcd8d6;box-shadow:1px 0 0 #faf8f7"></div>
<div class="a" style="left:1863px;top:1020px;width:1px;height:19px;background:#dcd8d6;box-shadow:1px 0 0 #faf8f7"></div>
<div class="a" style="left:0;top:1040px;width:1920px;height:40px;background:linear-gradient(90deg,rgba(0,0,0,0) 0,rgba(0,0,0,0) 1690px,rgba(60,80,110,.38) 1760px,rgba(60,80,110,.42) 1900px),linear-gradient(#93acca 0,#a9c2de 2px,#a6c0dc 50%,#a3bdda 100%);border-top:1px solid #3b4a62"></div>
<div class="a" style="left:0;top:1041px;width:58px;height:39px;background:linear-gradient(90deg,rgba(70,95,135,.55),rgba(70,95,135,.4) 60%,rgba(70,95,135,0))"></div>
<div class="a" style="left:9px;top:1042px;width:37px;height:37px;border-radius:19px;background:radial-gradient(circle at 50% 30%,#9fd0f0 0,#3f86c8 35%,#1c4f96 65%,#0c2c66 100%);box-shadow:0 0 0 1px #22375c,0 0 3px 1px rgba(200,230,255,.7)"></div>
<svg style="left:16px;top:1049px" width="23" height="22" viewBox="0 0 23 22"><path d="M1 4c3-2 6-2 9 0l-2 7c-3-1.500-5-1.500-8 0z" fill="#e8502c"/><path d="M12 4.500c3 1.500 6 1.500 9-.5l-2 7c-3 2-6 2-9 .5z" fill="#7cc43c"/><path d="M0 12.500c3-1.500 5-1.500 8 0l-2 7c-3-1.500-5-1.500-8 0z" fill="#2c8ce0" transform="translate(1.500 0)"/><path d="M10 13c3 1.500 6 1.500 9-.5l-2 7c-3 2-6 2-9 .5z" fill="#f4c41c"/></svg>
<div class="a" style="left:60px;top:1041px;width:59px;height:39px;border:1px solid #6f83a3;border-radius:3px;background:linear-gradient(rgba(255,255,255,.55),rgba(255,255,255,.32) 45%,rgba(255,255,255,.12) 55%,rgba(255,255,255,.3));box-shadow:inset 0 0 0 1px rgba(255,255,255,.55)"></div>
<div class="a" style="left:183px;top:1041px;width:59px;height:39px;border:1px solid #6f83a3;border-radius:3px;background:linear-gradient(rgba(255,255,255,.55),rgba(255,255,255,.32) 45%,rgba(255,255,255,.12) 55%,rgba(255,255,255,.3));box-shadow:inset 0 0 0 1px rgba(255,255,255,.55)"></div>
<div class="a" style="left:246px;top:1041px;width:59px;height:39px;border:1px solid #6f83a3;border-radius:3px;background:linear-gradient(rgba(255,255,255,.55),rgba(255,255,255,.32) 45%,rgba(255,255,255,.12) 55%,rgba(255,255,255,.3));box-shadow:inset 0 0 0 1px rgba(255,255,255,.55)"></div>
<div class="a" style="left:308px;top:1041px;width:59px;height:39px;border:1px solid #6f83a3;border-radius:3px;background:linear-gradient(rgba(255,255,255,.55),rgba(255,255,255,.32) 45%,rgba(255,255,255,.12) 55%,rgba(255,255,255,.3));box-shadow:inset 0 0 0 1px rgba(255,255,255,.55)"></div>
<div class="a" style="left:370px;top:1041px;width:59px;height:39px;border:1px solid #6f83a3;border-radius:3px;background:linear-gradient(rgba(255,255,255,.55),rgba(255,255,255,.32) 45%,rgba(255,255,255,.12) 55%,rgba(255,255,255,.3));box-shadow:inset 0 0 0 1px rgba(255,255,255,.55)"></div>
<svg style="left:72px;top:1047px" width="34" height="30" viewBox="0 0 34 30"><path d="M1 4h9l2 2h15v10H1z" fill="#e8c860" stroke="#b8923c" stroke-width=".8"/><path d="M5 8h9l2 2h15v14H5z" fill="#f4dc84" stroke="#c8a24c" stroke-width=".8"/><rect x="7" y="12" width="22" height="4" fill="#f9eab0"/><path d="M8 20h20v9H8z" fill="#6cb0e8"/><rect x="13" y="23" width="10" height="6" fill="#cfe6f8"/><rect x="4" y="3" width="3" height="2" fill="#3ca84c"/><rect x="20" y="5" width="3" height="2" fill="#d8442c"/></svg>
<svg style="left:135px;top:1043px" width="36" height="34" viewBox="0 0 36 34"><path d="M6 18a12 12 0 1 1 23 4H13c1 5 8 6 11 2h5c-3 8-17 9-21 0-1-2-2-4-2-6zm7-2h11c-1-6-10-6-11 0z" fill="#3c9ee8"/><path d="M8 17a11 11 0 0 1 21 1" fill="none" stroke="#9cd4f8" stroke-width="2"/><path d="M4 30C-2 22 12 6 26 3c5-1 6 1 5 4-1-2-3-2-6-1C14 10 3 23 7 28c1 2 4 1 6 0-3 3-7 4-9 2z" fill="#f4c41c"/></svg>
<div class="a" style="left:198px;top:1046px;width:30px;height:30px;border-radius:15px;background:conic-gradient(from 60deg,#f4c20c 0 120deg,#2ca84c 120deg 240deg,#e8402c 240deg 360deg)"></div>
<div class="a" style="left:206px;top:1054px;width:14px;height:14px;border-radius:7px;background:#3f84f0;border:2px solid #fff"></div>
<svg style="left:262px;top:1047px" width="30" height="30" viewBox="0 0 30 30"><circle cx="7" cy="6" r="3.500" fill="#3c78d8"/><path d="M2 18c0-10 10-10 10 0z" fill="#3c78d8"/><circle cx="15" cy="4" r="3.500" fill="#8c4cc8"/><path d="M10 16c0-10 10-10 10 0z" fill="#8c4cc8"/><path d="M19 8h6v20h-6z" fill="#4cb83c"/><circle cx="22" cy="6" r="3.500" fill="#4cb83c"/><rect x="0" y="15" width="19" height="14" fill="#f4c43c" stroke="#b8862c" stroke-width=".8"/><path d="M0 15l9.500 8L19 15" fill="none" stroke="#b8862c"/><path d="M12 25L27 9l2.500 2.500L15 27l-4 1z" fill="#f0a83c" stroke="#8c5c1c" stroke-width=".7"/></svg>
<svg style="left:316px;top:1043px" width="42" height="36" viewBox="0 0 42 36"><rect x="18" y="2" width="9" height="12" fill="#c8ccd2"/><path d="M27 3h5v8h-5M29 3v8" stroke="#b4b8c0" fill="none"/><circle cx="17" cy="19" r="9" fill="#f4ece8" stroke="#d8442c" stroke-width="1.800"/><path d="M10 28h14l2 4H8z" fill="#c8281c"/><rect x="13" y="7" width="3" height="6" fill="#d8442c"/></svg>
<div class="t" style="left:325px;top:1065.500px;font-size:10.500px;font-weight:bold;color:#111;letter-spacing:.2px;text-shadow:0 0 1px #fff,1px 0 0 #fff,-1px 0 0 #fff,0 1px 0 #fff,0 -1px 0 #fff;line-height:12px">7800</div>
<div class="a" style="left:384px;top:1044px;width:30px;height:30px;background:linear-gradient(135deg,#0c3c84,#0a2c68);box-shadow:2px 3px 0 #061c44"></div>
<div class="t" style="left:390px;top:1048px;font-size:19px;font-weight:bold;color:#5cc0f8;line-height:22px;letter-spacing:-.5px">Ps</div>
<div class="a" style="left:1743px;top:1058px;border:4px solid transparent;border-bottom:4.500px solid #fff;border-top:0"></div>
<svg style="left:1763px;top:1052px" width="16" height="18" viewBox="0 0 16 18"><path d="M1 6h3l4-4v14l-4-4H1z" fill="#fff" stroke="#555" stroke-width=".5"/><path d="M10 6c1.500 2 1.500 4 0 6M12 3.500c3 3.500 3 7.500 0 11" stroke="#fff" stroke-width="1.300" fill="none"/></svg>
<svg style="left:1787px;top:1053px" width="16" height="18" viewBox="0 0 16 18"><path d="M2 0v17" stroke="#fff" stroke-width="2"/><path d="M4 1.500c3-1.500 5 1.500 10 0v7c-5 1.500-7-1.500-10 0z" fill="#fff"/></svg>
<svg style="left:1811px;top:1053px" width="17" height="18" viewBox="0 0 17 18"><rect x="4" y="4" width="12" height="9" fill="#7c8ca4" stroke="#fff" stroke-width="1.400"/><path d="M10 13v3M6 16.500h8" stroke="#fff" stroke-width="1.400"/><path d="M1 0v6h4V0M3 6v4h3" stroke="#fff" stroke-width="1.200" fill="none"/></svg>
<div class="t" style="left:1847px;top:1046.34px;font-size:12px;line-height:14px;color:#fff;letter-spacing:1.122px;">7:11 AM</div>
<div class="t" style="left:1844px;top:1063.34px;font-size:12px;line-height:14px;color:#fff;letter-spacing:-0.211px;">5/23/2018</div>
<div class="a" style="left:1905px;top:1041px;width:15px;height:39px;border-left:1px solid #3c4a60;background:linear-gradient(90deg,rgba(255,255,255,.35),rgba(120,140,170,.5) 40%,rgba(70,88,115,.6))"></div>
</body></html>
